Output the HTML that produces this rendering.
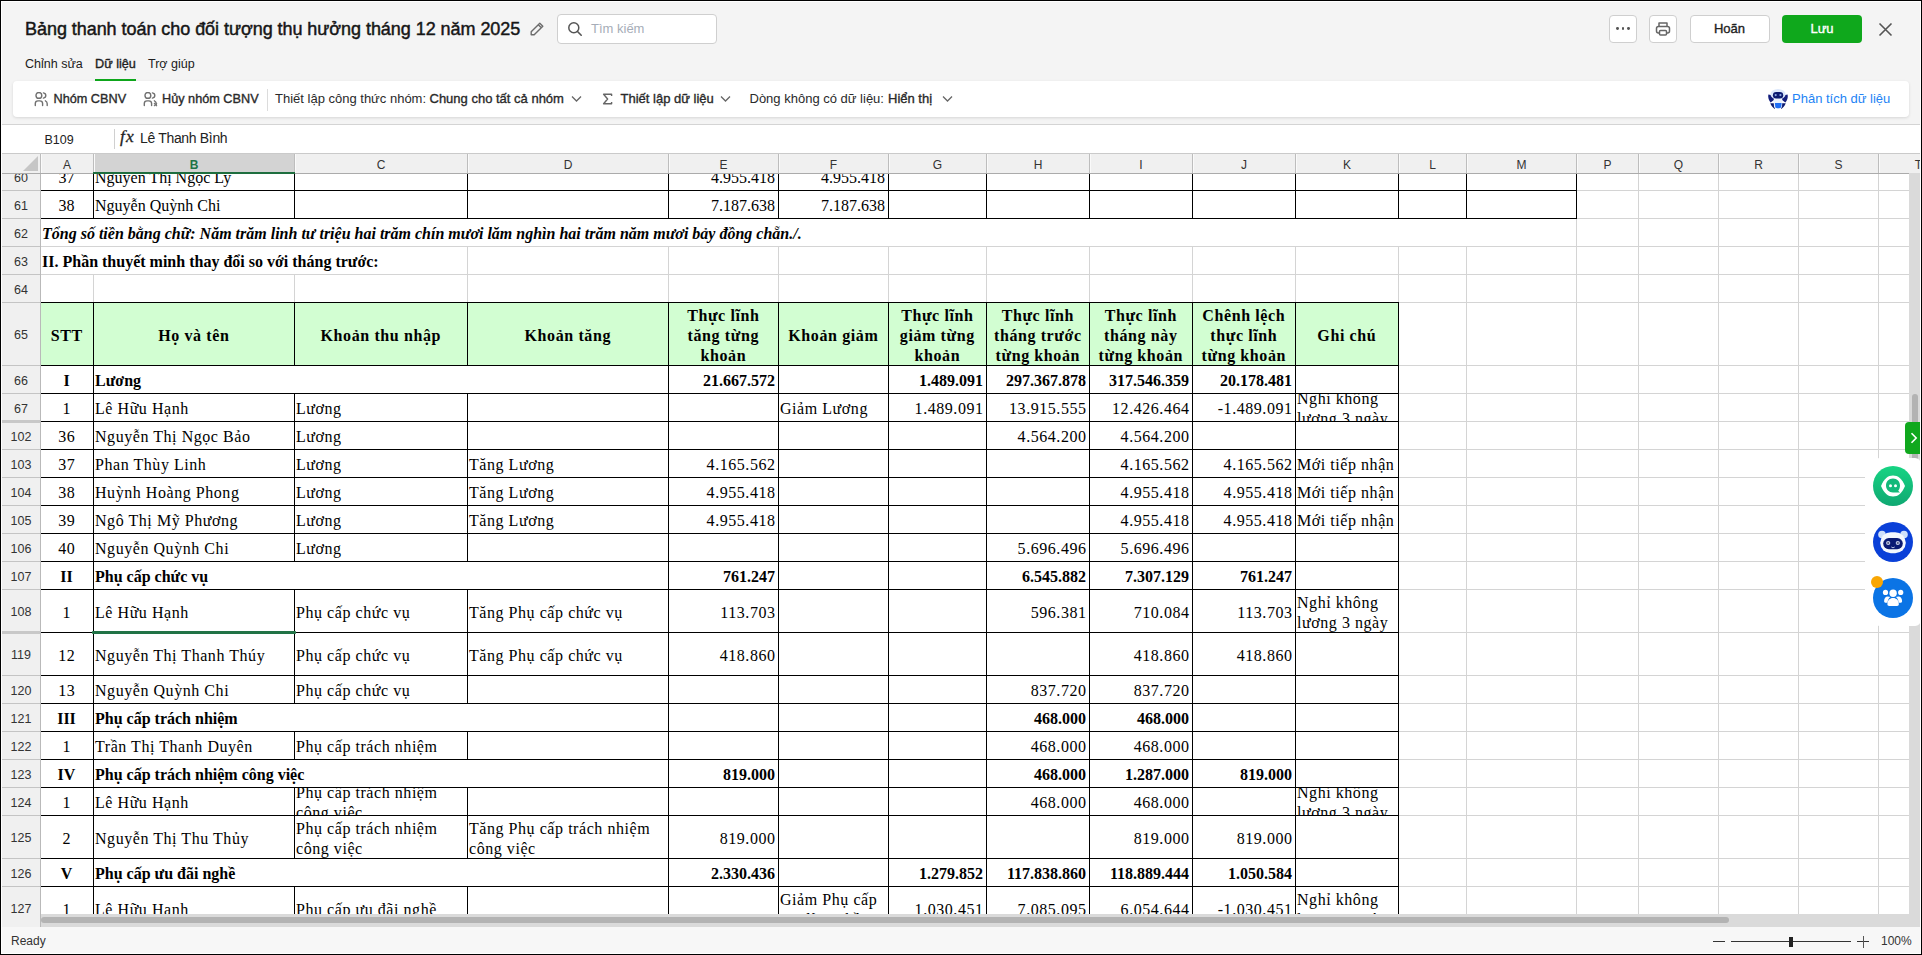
<!DOCTYPE html><html><head><meta charset="utf-8"><style>
html,body{margin:0;padding:0}
body{width:1922px;height:955px;position:relative;overflow:hidden;background:#f4f4f4;font-family:"Liberation Sans",sans-serif}
.t{position:absolute;white-space:pre}
.b{position:absolute}
.clip{position:absolute;overflow:hidden}
</style></head><body>

<div class="t" style="left:25px;top:19.76px;font:400 18px/18px 'Liberation Sans', sans-serif;color:#161616;-webkit-text-stroke:0.45px #161616;letter-spacing:-0.05px;">Bảng thanh toán cho đối tượng thụ hưởng tháng 12 năm 2025</div>
<svg class="b" style="left:529px;top:21px" width="16" height="16" viewBox="0 0 16 16"><path d="M10.8 2.2 L13.8 5.2 L5.2 13.8 L2.2 13.8 L2.2 10.8 Z M9.3 3.7 L12.3 6.7" fill="none" stroke="#6b6b6b" stroke-width="1.4" stroke-linejoin="round"/></svg>
<div class="b" style="left:557px;top:14px;width:158px;height:28px;background:#fff;border:1px solid #cfcfcf;border-radius:4px"></div>
<svg class="b" style="left:567px;top:21px" width="16" height="16" viewBox="0 0 16 16"><circle cx="6.8" cy="6.8" r="5" fill="none" stroke="#555" stroke-width="1.5"/><path d="M10.5 10.5 L14.2 14.2" stroke="#555" stroke-width="1.6" stroke-linecap="round"/></svg>
<div class="t" style="left:591px;top:22.00px;font:400 13px/13px 'Liberation Sans', sans-serif;color:#a6adb8;">Tìm kiếm</div>
<div class="b" style="left:1609px;top:15px;width:26px;height:26px;background:#fff;border:1px solid #cfcfcf;border-radius:4px"></div>
<div class="b" style="left:1616.3999999999999px;top:27.3px;width:2.8px;height:2.8px;background:#555;border-radius:50%"></div>
<div class="b" style="left:1621.6px;top:27.3px;width:2.8px;height:2.8px;background:#555;border-radius:50%"></div>
<div class="b" style="left:1626.8999999999999px;top:27.3px;width:2.8px;height:2.8px;background:#555;border-radius:50%"></div>
<div class="b" style="left:1649px;top:15px;width:26px;height:26px;background:#fff;border:1px solid #cfcfcf;border-radius:4px"></div>
<svg class="b" style="left:1654px;top:20px" width="18" height="18" viewBox="0 0 18 18"><path d="M5 6.5 V3 H13 V6.5" fill="none" stroke="#666" stroke-width="1.5" stroke-linejoin="round"/><rect x="2.5" y="6.5" width="13" height="6.5" rx="2" fill="none" stroke="#666" stroke-width="1.5"/><rect x="5.5" y="10.5" width="7" height="4.5" rx="1" fill="#fff" stroke="#666" stroke-width="1.5"/></svg>
<div class="b" style="left:1690px;top:15px;width:78px;height:26px;background:#fff;border:1px solid #cfcfcf;border-radius:4px"></div>
<div class="t" style="left:1690.5px;top:22.00px;width:78px;text-align:center;font:400 13px/13px 'Liberation Sans', sans-serif;color:#222;-webkit-text-stroke:0.35px currentColor;">Hoãn</div>
<div class="b" style="left:1782px;top:15px;width:80px;height:28px;background:#0fa81c;border-radius:4px"></div>
<div class="t" style="left:1782.0px;top:22.00px;width:80px;text-align:center;font:400 13px/13px 'Liberation Sans', sans-serif;color:#fff;-webkit-text-stroke:0.35px currentColor;">Lưu</div>
<svg class="b" style="left:1878px;top:22px" width="15" height="15" viewBox="0 0 15 15"><path d="M1.5 1.5 L13.5 13.5 M13.5 1.5 L1.5 13.5" stroke="#555" stroke-width="1.6"/></svg>
<div class="t" style="left:25px;top:58.42px;font:400 12.5px/12.5px 'Liberation Sans', sans-serif;color:#202020;">Chỉnh sửa</div>
<div class="t" style="left:95px;top:58.25px;font:400 12.7px/12.7px 'Liberation Sans', sans-serif;color:#1f1f1f;-webkit-text-stroke:0.35px currentColor;">Dữ liệu</div>
<div class="t" style="left:148px;top:58.42px;font:400 12.5px/12.5px 'Liberation Sans', sans-serif;color:#202020;">Trợ giúp</div>
<div class="b" style="left:95px;top:79px;width:41px;height:2px;background:#0fa81c"></div>
<div class="b" style="left:13px;top:81px;width:1896px;height:36px;background:#fff;border-radius:4px;box-shadow:0 1px 3px rgba(0,0,0,0.12)"></div>
<svg class="b" style="left:33px;top:92px" width="16" height="15" viewBox="0 0 16 15"><circle cx="5.9" cy="3.4" r="2.9" fill="none" stroke="#707070" stroke-width="1.4"/><path d="M2.3 13.6 V11.6 C2.3 9.9 3.5 8.9 5 8.9 H6.8 C8.4 8.9 9.6 9.9 9.6 11.6 V13.6" fill="none" stroke="#707070" stroke-width="1.4" stroke-linecap="round"/><path d="M10.4 0.9 C11.9 1.2 12.8 2.2 12.8 3.5 C12.8 4.8 11.9 5.8 10.4 6.1" fill="none" stroke="#707070" stroke-width="1.4" stroke-linecap="round"/><path d="M12.4 8.8 C13.6 9.3 14.2 10.4 14.2 11.8 V13.6" fill="none" stroke="#707070" stroke-width="1.4" stroke-linecap="round"/></svg>
<div class="t" style="left:53.5px;top:93.25px;font:400 12.7px/12.7px 'Liberation Sans', sans-serif;color:#2a2a2a;-webkit-text-stroke:0.35px currentColor;">Nhóm CBNV</div>
<svg class="b" style="left:142px;top:92px" width="16" height="15" viewBox="0 0 16 15"><circle cx="5.9" cy="3.4" r="2.9" fill="none" stroke="#707070" stroke-width="1.4"/><path d="M2.3 13.6 V11.6 C2.3 9.9 3.5 8.9 5 8.9 H6.8 C8.4 8.9 9.6 9.9 9.6 11.6 V13.6" fill="none" stroke="#707070" stroke-width="1.4" stroke-linecap="round"/><path d="M10.4 0.9 C11.9 1.2 12.8 2.2 12.8 3.5 C12.8 4.8 11.9 5.8 10.4 6.1" fill="none" stroke="#707070" stroke-width="1.4" stroke-linecap="round"/><path d="M12.4 8.8 C13.6 9.3 14.2 10.4 14.2 11.8 V13.6" fill="none" stroke="#707070" stroke-width="1.4" stroke-linecap="round"/><path d="M12 11 L15 14 M15 11 L12 14" stroke="#777" stroke-width="1.1"/></svg>
<div class="t" style="left:162px;top:93.25px;font:400 12.7px/12.7px 'Liberation Sans', sans-serif;color:#2a2a2a;-webkit-text-stroke:0.35px currentColor;">Hủy nhóm CBNV</div>
<div class="b" style="left:267px;top:89px;width:1px;height:22px;background:#dcdcdc"></div>
<div class="t" style="left:275px;top:92.00px;font:400 13px/13px 'Liberation Sans', sans-serif;color:#2a2a2a;">Thiết lập công thức nhóm:</div>
<div class="t" style="left:429.5px;top:92.00px;font:400 13px/13px 'Liberation Sans', sans-serif;color:#2a2a2a;-webkit-text-stroke:0.35px currentColor;">Chung cho tất cả nhóm</div>
<svg class="b" style="left:571px;top:95px" width="11" height="8" viewBox="0 0 11 8"><path d="M1 1.5 L5.5 6 L10 1.5" fill="none" stroke="#666" stroke-width="1.3"/></svg>
<svg class="b" style="left:602px;top:93px" width="11" height="12" viewBox="0 0 11 12"><path d="M9.6 3 V1.3 H1.6 L5.6 6 L1.6 10.7 H9.6 V9" fill="none" stroke="#666" stroke-width="1.4" stroke-linejoin="round"/></svg>
<div class="t" style="left:620.5px;top:92.00px;font:400 13px/13px 'Liberation Sans', sans-serif;color:#2a2a2a;-webkit-text-stroke:0.35px currentColor;">Thiết lập dữ liệu</div>
<svg class="b" style="left:720px;top:95px" width="11" height="8" viewBox="0 0 11 8"><path d="M1 1.5 L5.5 6 L10 1.5" fill="none" stroke="#666" stroke-width="1.3"/></svg>
<div class="t" style="left:749.5px;top:92.00px;font:400 13px/13px 'Liberation Sans', sans-serif;color:#2a2a2a;">Dòng không có dữ liệu:</div>
<div class="t" style="left:888px;top:92.00px;font:400 13px/13px 'Liberation Sans', sans-serif;color:#2a2a2a;-webkit-text-stroke:0.35px currentColor;">Hiển thị</div>
<svg class="b" style="left:942px;top:95px" width="11" height="8" viewBox="0 0 11 8"><path d="M1 1.5 L5.5 6 L10 1.5" fill="none" stroke="#666" stroke-width="1.3"/></svg>
<svg class="b" style="left:1768px;top:89px" width="20" height="20" viewBox="0 0 20 20">
<path d="M0.4 5.5 C-0.1 8.5 0.6 11.5 2.6 13.5 L6 11 L5.6 6.5 Z" fill="#121d7c"/><path d="M19.6 5.5 C20.1 8.5 19.4 11.5 17.4 13.5 L14 11 L14.4 6.5 Z" fill="#121d7c"/>
<path d="M2.3 14.3 L7 14.3 L7 19.9 C5 19 3.4 17 2.3 14.3 Z" fill="#0b1a70"/><path d="M17.7 14.3 L13 14.3 L13 19.9 C15 19 16.6 17 17.7 14.3 Z" fill="#0b1a70"/>
<ellipse cx="10" cy="5.3" rx="7.6" ry="5.2" fill="#dce8fb"/>
<rect x="4.9" y="3" width="10.3" height="6.6" rx="3.3" fill="#0b1a70"/>
<circle cx="7.7" cy="6.1" r="1.1" fill="#8aa6e2"/><circle cx="12.4" cy="6.1" r="1.1" fill="#8aa6e2"/>
<path d="M5.6 10.6 H14.4 L14 18.3 C12.6 19.9 7.4 19.9 6 18.3 Z" fill="#eaf1fd"/>
<path d="M6.9 14 H13.6 L13.2 18.2 C12 19.7 8 19.7 7.3 18.2 Z" fill="#1f6ef5"/>
</svg>
<div class="t" style="left:1792px;top:92.00px;font:400 13px/13px 'Liberation Sans', sans-serif;color:#2383f5;">Phân tích dữ liệu</div>
<div class="b" style="left:2px;top:124px;width:1918px;height:1px;background:#d4d4d4"></div>
<div class="b" style="left:2px;top:125px;width:1918px;height:28px;background:#fff"></div>
<div class="t" style="left:44.5px;top:134.42px;font:400 12.5px/12.5px 'Liberation Sans', sans-serif;color:#222;">B109</div>
<div class="b" style="left:114px;top:129px;width:1px;height:20px;background:#d0d0d0"></div>
<div class="t" style="left:120px;top:127.84px;font:italic 400 17.5px/17.5px 'Liberation Serif', serif;color:#222;-webkit-text-stroke:0.3px #222;letter-spacing:1.2px;">fx</div>
<div class="t" style="left:140px;top:131.15px;font:400 14px/14px 'Liberation Sans', sans-serif;color:#222;letter-spacing:-0.33px;">Lê Thanh Bình</div>
<div class="b" style="left:1px;top:153px;width:1919px;height:1px;background:#cacaca"></div>
<div class="b" style="left:1px;top:154px;width:1919px;height:19px;background:#f0f0f0"></div>
<svg class="b" style="left:22px;top:156px" width="16" height="16" viewBox="0 0 16 16"><path d="M16 0 V15 H1 Z" fill="#c6c6c6"/></svg>
<div class="b" style="left:94px;top:154px;width:200px;height:18px;background:#d3d3d3"></div>
<div class="b" style="left:40px;top:154px;width:1px;height:19px;background:#bdbdbd"></div>
<div class="b" style="left:41px;top:154px;width:1px;height:19px;background:#fafafa"></div>
<div class="b" style="left:93px;top:154px;width:1px;height:19px;background:#bdbdbd"></div>
<div class="b" style="left:94px;top:154px;width:1px;height:19px;background:#fafafa"></div>
<div class="b" style="left:294px;top:154px;width:1px;height:19px;background:#bdbdbd"></div>
<div class="b" style="left:295px;top:154px;width:1px;height:19px;background:#fafafa"></div>
<div class="b" style="left:467px;top:154px;width:1px;height:19px;background:#bdbdbd"></div>
<div class="b" style="left:468px;top:154px;width:1px;height:19px;background:#fafafa"></div>
<div class="b" style="left:668px;top:154px;width:1px;height:19px;background:#bdbdbd"></div>
<div class="b" style="left:669px;top:154px;width:1px;height:19px;background:#fafafa"></div>
<div class="b" style="left:778px;top:154px;width:1px;height:19px;background:#bdbdbd"></div>
<div class="b" style="left:779px;top:154px;width:1px;height:19px;background:#fafafa"></div>
<div class="b" style="left:888px;top:154px;width:1px;height:19px;background:#bdbdbd"></div>
<div class="b" style="left:889px;top:154px;width:1px;height:19px;background:#fafafa"></div>
<div class="b" style="left:986px;top:154px;width:1px;height:19px;background:#bdbdbd"></div>
<div class="b" style="left:987px;top:154px;width:1px;height:19px;background:#fafafa"></div>
<div class="b" style="left:1089px;top:154px;width:1px;height:19px;background:#bdbdbd"></div>
<div class="b" style="left:1090px;top:154px;width:1px;height:19px;background:#fafafa"></div>
<div class="b" style="left:1192px;top:154px;width:1px;height:19px;background:#bdbdbd"></div>
<div class="b" style="left:1193px;top:154px;width:1px;height:19px;background:#fafafa"></div>
<div class="b" style="left:1295px;top:154px;width:1px;height:19px;background:#bdbdbd"></div>
<div class="b" style="left:1296px;top:154px;width:1px;height:19px;background:#fafafa"></div>
<div class="b" style="left:1398px;top:154px;width:1px;height:19px;background:#bdbdbd"></div>
<div class="b" style="left:1399px;top:154px;width:1px;height:19px;background:#fafafa"></div>
<div class="b" style="left:1466px;top:154px;width:1px;height:19px;background:#bdbdbd"></div>
<div class="b" style="left:1467px;top:154px;width:1px;height:19px;background:#fafafa"></div>
<div class="b" style="left:1576px;top:154px;width:1px;height:19px;background:#bdbdbd"></div>
<div class="b" style="left:1577px;top:154px;width:1px;height:19px;background:#fafafa"></div>
<div class="b" style="left:1638px;top:154px;width:1px;height:19px;background:#bdbdbd"></div>
<div class="b" style="left:1639px;top:154px;width:1px;height:19px;background:#fafafa"></div>
<div class="b" style="left:1718px;top:154px;width:1px;height:19px;background:#bdbdbd"></div>
<div class="b" style="left:1719px;top:154px;width:1px;height:19px;background:#fafafa"></div>
<div class="b" style="left:1798px;top:154px;width:1px;height:19px;background:#bdbdbd"></div>
<div class="b" style="left:1799px;top:154px;width:1px;height:19px;background:#fafafa"></div>
<div class="b" style="left:1878px;top:154px;width:1px;height:19px;background:#bdbdbd"></div>
<div class="b" style="left:1879px;top:154px;width:1px;height:19px;background:#fafafa"></div>
<div class="b" style="left:1px;top:173px;width:1908px;height:1px;background:#ababab"></div>
<div class="b" style="left:93px;top:172px;width:202px;height:2px;background:#1e6e3e"></div>
<div class="t" style="left:37.0px;top:159.34px;width:60px;text-align:center;font:400 12px/12px 'Liberation Sans', sans-serif;color:#333;">A</div>
<div class="t" style="left:164.0px;top:159.34px;width:60px;text-align:center;font:700 12px/12px 'Liberation Sans', sans-serif;color:#217346;">B</div>
<div class="t" style="left:351.0px;top:159.34px;width:60px;text-align:center;font:400 12px/12px 'Liberation Sans', sans-serif;color:#333;">C</div>
<div class="t" style="left:538.0px;top:159.34px;width:60px;text-align:center;font:400 12px/12px 'Liberation Sans', sans-serif;color:#333;">D</div>
<div class="t" style="left:693.5px;top:159.34px;width:60px;text-align:center;font:400 12px/12px 'Liberation Sans', sans-serif;color:#333;">E</div>
<div class="t" style="left:803.5px;top:159.34px;width:60px;text-align:center;font:400 12px/12px 'Liberation Sans', sans-serif;color:#333;">F</div>
<div class="t" style="left:907.5px;top:159.34px;width:60px;text-align:center;font:400 12px/12px 'Liberation Sans', sans-serif;color:#333;">G</div>
<div class="t" style="left:1008.0px;top:159.34px;width:60px;text-align:center;font:400 12px/12px 'Liberation Sans', sans-serif;color:#333;">H</div>
<div class="t" style="left:1111.0px;top:159.34px;width:60px;text-align:center;font:400 12px/12px 'Liberation Sans', sans-serif;color:#333;">I</div>
<div class="t" style="left:1214.0px;top:159.34px;width:60px;text-align:center;font:400 12px/12px 'Liberation Sans', sans-serif;color:#333;">J</div>
<div class="t" style="left:1317.0px;top:159.34px;width:60px;text-align:center;font:400 12px/12px 'Liberation Sans', sans-serif;color:#333;">K</div>
<div class="t" style="left:1402.5px;top:159.34px;width:60px;text-align:center;font:400 12px/12px 'Liberation Sans', sans-serif;color:#333;">L</div>
<div class="t" style="left:1491.5px;top:159.34px;width:60px;text-align:center;font:400 12px/12px 'Liberation Sans', sans-serif;color:#333;">M</div>
<div class="t" style="left:1577.5px;top:159.34px;width:60px;text-align:center;font:400 12px/12px 'Liberation Sans', sans-serif;color:#333;">P</div>
<div class="t" style="left:1648.5px;top:159.34px;width:60px;text-align:center;font:400 12px/12px 'Liberation Sans', sans-serif;color:#333;">Q</div>
<div class="t" style="left:1728.5px;top:159.34px;width:60px;text-align:center;font:400 12px/12px 'Liberation Sans', sans-serif;color:#333;">R</div>
<div class="t" style="left:1808.5px;top:159.34px;width:60px;text-align:center;font:400 12px/12px 'Liberation Sans', sans-serif;color:#333;">S</div>
<div class="t" style="left:1888.5px;top:159.34px;width:60px;text-align:center;font:400 12px/12px 'Liberation Sans', sans-serif;color:#333;">T</div>
<div class="clip" style="left:1px;top:174px;width:1908px;height:740px;background:#fff">
<div class="b" style="left:0px;top:0px;width:39px;height:740px;background:#f0f0f0"></div>
<div class="b" style="left:39px;top:0px;width:1px;height:740px;background:#b9b9b9"></div>
<div class="b" style="left:92px;top:0px;width:1px;height:740px;background:#d4d4d4"></div>
<div class="b" style="left:293px;top:0px;width:1px;height:740px;background:#d4d4d4"></div>
<div class="b" style="left:466px;top:0px;width:1px;height:740px;background:#d4d4d4"></div>
<div class="b" style="left:667px;top:0px;width:1px;height:740px;background:#d4d4d4"></div>
<div class="b" style="left:777px;top:0px;width:1px;height:740px;background:#d4d4d4"></div>
<div class="b" style="left:887px;top:0px;width:1px;height:740px;background:#d4d4d4"></div>
<div class="b" style="left:985px;top:0px;width:1px;height:740px;background:#d4d4d4"></div>
<div class="b" style="left:1088px;top:0px;width:1px;height:740px;background:#d4d4d4"></div>
<div class="b" style="left:1191px;top:0px;width:1px;height:740px;background:#d4d4d4"></div>
<div class="b" style="left:1294px;top:0px;width:1px;height:740px;background:#d4d4d4"></div>
<div class="b" style="left:1397px;top:0px;width:1px;height:740px;background:#d4d4d4"></div>
<div class="b" style="left:1465px;top:0px;width:1px;height:740px;background:#d4d4d4"></div>
<div class="b" style="left:1575px;top:0px;width:1px;height:740px;background:#d4d4d4"></div>
<div class="b" style="left:1637px;top:0px;width:1px;height:740px;background:#d4d4d4"></div>
<div class="b" style="left:1717px;top:0px;width:1px;height:740px;background:#d4d4d4"></div>
<div class="b" style="left:1797px;top:0px;width:1px;height:740px;background:#d4d4d4"></div>
<div class="b" style="left:1877px;top:0px;width:1px;height:740px;background:#d4d4d4"></div>
<div class="b" style="left:1957px;top:0px;width:1px;height:740px;background:#d4d4d4"></div>
<div class="b" style="left:40px;top:16px;width:1868px;height:1px;background:#d4d4d4"></div>
<div class="b" style="left:0px;top:16px;width:39px;height:1px;background:#c4c4c4"></div>
<div class="b" style="left:40px;top:44px;width:1868px;height:1px;background:#d4d4d4"></div>
<div class="b" style="left:0px;top:44px;width:39px;height:1px;background:#c4c4c4"></div>
<div class="b" style="left:40px;top:72px;width:1868px;height:1px;background:#d4d4d4"></div>
<div class="b" style="left:0px;top:72px;width:39px;height:1px;background:#c4c4c4"></div>
<div class="b" style="left:40px;top:100px;width:1868px;height:1px;background:#d4d4d4"></div>
<div class="b" style="left:0px;top:100px;width:39px;height:1px;background:#c4c4c4"></div>
<div class="b" style="left:40px;top:128px;width:1868px;height:1px;background:#d4d4d4"></div>
<div class="b" style="left:0px;top:128px;width:39px;height:1px;background:#c4c4c4"></div>
<div class="b" style="left:40px;top:191px;width:1868px;height:1px;background:#d4d4d4"></div>
<div class="b" style="left:0px;top:191px;width:39px;height:1px;background:#c4c4c4"></div>
<div class="b" style="left:40px;top:219px;width:1868px;height:1px;background:#d4d4d4"></div>
<div class="b" style="left:0px;top:219px;width:39px;height:1px;background:#c4c4c4"></div>
<div class="b" style="left:40px;top:247px;width:1868px;height:1px;background:#d4d4d4"></div>
<div class="b" style="left:0px;top:247px;width:39px;height:1px;background:#c4c4c4"></div>
<div class="b" style="left:40px;top:275px;width:1868px;height:1px;background:#d4d4d4"></div>
<div class="b" style="left:0px;top:275px;width:39px;height:1px;background:#c4c4c4"></div>
<div class="b" style="left:40px;top:303px;width:1868px;height:1px;background:#d4d4d4"></div>
<div class="b" style="left:0px;top:303px;width:39px;height:1px;background:#c4c4c4"></div>
<div class="b" style="left:40px;top:331px;width:1868px;height:1px;background:#d4d4d4"></div>
<div class="b" style="left:0px;top:331px;width:39px;height:1px;background:#c4c4c4"></div>
<div class="b" style="left:40px;top:359px;width:1868px;height:1px;background:#d4d4d4"></div>
<div class="b" style="left:0px;top:359px;width:39px;height:1px;background:#c4c4c4"></div>
<div class="b" style="left:40px;top:387px;width:1868px;height:1px;background:#d4d4d4"></div>
<div class="b" style="left:0px;top:387px;width:39px;height:1px;background:#c4c4c4"></div>
<div class="b" style="left:40px;top:415px;width:1868px;height:1px;background:#d4d4d4"></div>
<div class="b" style="left:0px;top:415px;width:39px;height:1px;background:#c4c4c4"></div>
<div class="b" style="left:40px;top:458px;width:1868px;height:1px;background:#d4d4d4"></div>
<div class="b" style="left:0px;top:458px;width:39px;height:1px;background:#c4c4c4"></div>
<div class="b" style="left:40px;top:501px;width:1868px;height:1px;background:#d4d4d4"></div>
<div class="b" style="left:0px;top:501px;width:39px;height:1px;background:#c4c4c4"></div>
<div class="b" style="left:40px;top:529px;width:1868px;height:1px;background:#d4d4d4"></div>
<div class="b" style="left:0px;top:529px;width:39px;height:1px;background:#c4c4c4"></div>
<div class="b" style="left:40px;top:557px;width:1868px;height:1px;background:#d4d4d4"></div>
<div class="b" style="left:0px;top:557px;width:39px;height:1px;background:#c4c4c4"></div>
<div class="b" style="left:40px;top:585px;width:1868px;height:1px;background:#d4d4d4"></div>
<div class="b" style="left:0px;top:585px;width:39px;height:1px;background:#c4c4c4"></div>
<div class="b" style="left:40px;top:613px;width:1868px;height:1px;background:#d4d4d4"></div>
<div class="b" style="left:0px;top:613px;width:39px;height:1px;background:#c4c4c4"></div>
<div class="b" style="left:40px;top:641px;width:1868px;height:1px;background:#d4d4d4"></div>
<div class="b" style="left:0px;top:641px;width:39px;height:1px;background:#c4c4c4"></div>
<div class="b" style="left:40px;top:684px;width:1868px;height:1px;background:#d4d4d4"></div>
<div class="b" style="left:0px;top:684px;width:39px;height:1px;background:#c4c4c4"></div>
<div class="b" style="left:40px;top:712px;width:1868px;height:1px;background:#d4d4d4"></div>
<div class="b" style="left:0px;top:712px;width:39px;height:1px;background:#c4c4c4"></div>
<div class="b" style="left:40px;top:755px;width:1868px;height:1px;background:#d4d4d4"></div>
<div class="b" style="left:0px;top:755px;width:39px;height:1px;background:#c4c4c4"></div>
<div class="b" style="left:0px;top:246px;width:39px;height:3px;background:#c8c8c8"></div>
<div class="b" style="left:0px;top:457px;width:39px;height:3px;background:#c8c8c8"></div>
<div class="t" style="left:1.0px;top:-2.08px;width:38px;text-align:center;font:400 12.5px/12.5px 'Liberation Sans', sans-serif;color:#333;">60</div>
<div class="t" style="left:1.0px;top:25.92px;width:38px;text-align:center;font:400 12.5px/12.5px 'Liberation Sans', sans-serif;color:#333;">61</div>
<div class="t" style="left:1.0px;top:53.92px;width:38px;text-align:center;font:400 12.5px/12.5px 'Liberation Sans', sans-serif;color:#333;">62</div>
<div class="t" style="left:1.0px;top:81.92px;width:38px;text-align:center;font:400 12.5px/12.5px 'Liberation Sans', sans-serif;color:#333;">63</div>
<div class="t" style="left:1.0px;top:109.92px;width:38px;text-align:center;font:400 12.5px/12.5px 'Liberation Sans', sans-serif;color:#333;">64</div>
<div class="t" style="left:1.0px;top:155.42px;width:38px;text-align:center;font:400 12.5px/12.5px 'Liberation Sans', sans-serif;color:#333;">65</div>
<div class="t" style="left:1.0px;top:200.92px;width:38px;text-align:center;font:400 12.5px/12.5px 'Liberation Sans', sans-serif;color:#333;">66</div>
<div class="t" style="left:1.0px;top:228.92px;width:38px;text-align:center;font:400 12.5px/12.5px 'Liberation Sans', sans-serif;color:#333;">67</div>
<div class="t" style="left:1.0px;top:256.92px;width:38px;text-align:center;font:400 12.5px/12.5px 'Liberation Sans', sans-serif;color:#333;">102</div>
<div class="t" style="left:1.0px;top:284.92px;width:38px;text-align:center;font:400 12.5px/12.5px 'Liberation Sans', sans-serif;color:#333;">103</div>
<div class="t" style="left:1.0px;top:312.92px;width:38px;text-align:center;font:400 12.5px/12.5px 'Liberation Sans', sans-serif;color:#333;">104</div>
<div class="t" style="left:1.0px;top:340.92px;width:38px;text-align:center;font:400 12.5px/12.5px 'Liberation Sans', sans-serif;color:#333;">105</div>
<div class="t" style="left:1.0px;top:368.92px;width:38px;text-align:center;font:400 12.5px/12.5px 'Liberation Sans', sans-serif;color:#333;">106</div>
<div class="t" style="left:1.0px;top:396.92px;width:38px;text-align:center;font:400 12.5px/12.5px 'Liberation Sans', sans-serif;color:#333;">107</div>
<div class="t" style="left:1.0px;top:432.42px;width:38px;text-align:center;font:400 12.5px/12.5px 'Liberation Sans', sans-serif;color:#333;">108</div>
<div class="t" style="left:1.0px;top:475.42px;width:38px;text-align:center;font:400 12.5px/12.5px 'Liberation Sans', sans-serif;color:#333;">119</div>
<div class="t" style="left:1.0px;top:510.92px;width:38px;text-align:center;font:400 12.5px/12.5px 'Liberation Sans', sans-serif;color:#333;">120</div>
<div class="t" style="left:1.0px;top:538.92px;width:38px;text-align:center;font:400 12.5px/12.5px 'Liberation Sans', sans-serif;color:#333;">121</div>
<div class="t" style="left:1.0px;top:566.92px;width:38px;text-align:center;font:400 12.5px/12.5px 'Liberation Sans', sans-serif;color:#333;">122</div>
<div class="t" style="left:1.0px;top:594.92px;width:38px;text-align:center;font:400 12.5px/12.5px 'Liberation Sans', sans-serif;color:#333;">123</div>
<div class="t" style="left:1.0px;top:622.92px;width:38px;text-align:center;font:400 12.5px/12.5px 'Liberation Sans', sans-serif;color:#333;">124</div>
<div class="t" style="left:1.0px;top:658.42px;width:38px;text-align:center;font:400 12.5px/12.5px 'Liberation Sans', sans-serif;color:#333;">125</div>
<div class="t" style="left:1.0px;top:693.92px;width:38px;text-align:center;font:400 12.5px/12.5px 'Liberation Sans', sans-serif;color:#333;">126</div>
<div class="t" style="left:1.0px;top:729.42px;width:38px;text-align:center;font:400 12.5px/12.5px 'Liberation Sans', sans-serif;color:#333;">127</div>
<div class="b" style="left:40px;top:45px;width:1535px;height:27px;background:#fff"></div>
<div class="b" style="left:40px;top:73px;width:426px;height:27px;background:#fff"></div>
<div class="b" style="left:40px;top:129px;width:1357px;height:62px;background:#d2fed2"></div>
<div class="b" style="left:93px;top:192px;width:574px;height:27px;background:#fff"></div>
<div class="b" style="left:93px;top:388px;width:574px;height:27px;background:#fff"></div>
<div class="b" style="left:93px;top:530px;width:574px;height:27px;background:#fff"></div>
<div class="b" style="left:93px;top:586px;width:574px;height:27px;background:#fff"></div>
<div class="b" style="left:93px;top:685px;width:574px;height:27px;background:#fff"></div>
<div class="b" style="left:40px;top:16px;width:1536px;height:1px;background:#000"></div>
<div class="b" style="left:40px;top:44px;width:1536px;height:1px;background:#000"></div>
<div class="b" style="left:92px;top:0px;width:1px;height:45px;background:#000"></div>
<div class="b" style="left:293px;top:0px;width:1px;height:45px;background:#000"></div>
<div class="b" style="left:466px;top:0px;width:1px;height:45px;background:#000"></div>
<div class="b" style="left:667px;top:0px;width:1px;height:45px;background:#000"></div>
<div class="b" style="left:777px;top:0px;width:1px;height:45px;background:#000"></div>
<div class="b" style="left:887px;top:0px;width:1px;height:45px;background:#000"></div>
<div class="b" style="left:985px;top:0px;width:1px;height:45px;background:#000"></div>
<div class="b" style="left:1088px;top:0px;width:1px;height:45px;background:#000"></div>
<div class="b" style="left:1191px;top:0px;width:1px;height:45px;background:#000"></div>
<div class="b" style="left:1294px;top:0px;width:1px;height:45px;background:#000"></div>
<div class="b" style="left:1397px;top:0px;width:1px;height:45px;background:#000"></div>
<div class="b" style="left:1465px;top:0px;width:1px;height:45px;background:#000"></div>
<div class="b" style="left:1575px;top:0px;width:1px;height:45px;background:#000"></div>
<div class="b" style="left:40px;top:128px;width:1358px;height:1px;background:#000"></div>
<div class="b" style="left:40px;top:191px;width:1358px;height:1px;background:#000"></div>
<div class="b" style="left:40px;top:219px;width:1358px;height:1px;background:#000"></div>
<div class="b" style="left:40px;top:247px;width:1358px;height:1px;background:#000"></div>
<div class="b" style="left:40px;top:275px;width:1358px;height:1px;background:#000"></div>
<div class="b" style="left:40px;top:303px;width:1358px;height:1px;background:#000"></div>
<div class="b" style="left:40px;top:331px;width:1358px;height:1px;background:#000"></div>
<div class="b" style="left:40px;top:359px;width:1358px;height:1px;background:#000"></div>
<div class="b" style="left:40px;top:387px;width:1358px;height:1px;background:#000"></div>
<div class="b" style="left:40px;top:415px;width:1358px;height:1px;background:#000"></div>
<div class="b" style="left:40px;top:458px;width:1358px;height:1px;background:#000"></div>
<div class="b" style="left:40px;top:501px;width:1358px;height:1px;background:#000"></div>
<div class="b" style="left:40px;top:529px;width:1358px;height:1px;background:#000"></div>
<div class="b" style="left:40px;top:557px;width:1358px;height:1px;background:#000"></div>
<div class="b" style="left:40px;top:585px;width:1358px;height:1px;background:#000"></div>
<div class="b" style="left:40px;top:613px;width:1358px;height:1px;background:#000"></div>
<div class="b" style="left:40px;top:641px;width:1358px;height:1px;background:#000"></div>
<div class="b" style="left:40px;top:684px;width:1358px;height:1px;background:#000"></div>
<div class="b" style="left:40px;top:712px;width:1358px;height:1px;background:#000"></div>
<div class="b" style="left:40px;top:755px;width:1358px;height:1px;background:#000"></div>
<div class="b" style="left:92px;top:128px;width:1px;height:64px;background:#000"></div>
<div class="b" style="left:293px;top:128px;width:1px;height:64px;background:#000"></div>
<div class="b" style="left:466px;top:128px;width:1px;height:64px;background:#000"></div>
<div class="b" style="left:667px;top:128px;width:1px;height:64px;background:#000"></div>
<div class="b" style="left:777px;top:128px;width:1px;height:64px;background:#000"></div>
<div class="b" style="left:887px;top:128px;width:1px;height:64px;background:#000"></div>
<div class="b" style="left:985px;top:128px;width:1px;height:64px;background:#000"></div>
<div class="b" style="left:1088px;top:128px;width:1px;height:64px;background:#000"></div>
<div class="b" style="left:1191px;top:128px;width:1px;height:64px;background:#000"></div>
<div class="b" style="left:1294px;top:128px;width:1px;height:64px;background:#000"></div>
<div class="b" style="left:1397px;top:128px;width:1px;height:64px;background:#000"></div>
<div class="b" style="left:92px;top:191px;width:1px;height:29px;background:#000"></div>
<div class="b" style="left:667px;top:191px;width:1px;height:29px;background:#000"></div>
<div class="b" style="left:777px;top:191px;width:1px;height:29px;background:#000"></div>
<div class="b" style="left:887px;top:191px;width:1px;height:29px;background:#000"></div>
<div class="b" style="left:985px;top:191px;width:1px;height:29px;background:#000"></div>
<div class="b" style="left:1088px;top:191px;width:1px;height:29px;background:#000"></div>
<div class="b" style="left:1191px;top:191px;width:1px;height:29px;background:#000"></div>
<div class="b" style="left:1294px;top:191px;width:1px;height:29px;background:#000"></div>
<div class="b" style="left:1397px;top:191px;width:1px;height:29px;background:#000"></div>
<div class="b" style="left:92px;top:219px;width:1px;height:29px;background:#000"></div>
<div class="b" style="left:293px;top:219px;width:1px;height:29px;background:#000"></div>
<div class="b" style="left:466px;top:219px;width:1px;height:29px;background:#000"></div>
<div class="b" style="left:667px;top:219px;width:1px;height:29px;background:#000"></div>
<div class="b" style="left:777px;top:219px;width:1px;height:29px;background:#000"></div>
<div class="b" style="left:887px;top:219px;width:1px;height:29px;background:#000"></div>
<div class="b" style="left:985px;top:219px;width:1px;height:29px;background:#000"></div>
<div class="b" style="left:1088px;top:219px;width:1px;height:29px;background:#000"></div>
<div class="b" style="left:1191px;top:219px;width:1px;height:29px;background:#000"></div>
<div class="b" style="left:1294px;top:219px;width:1px;height:29px;background:#000"></div>
<div class="b" style="left:1397px;top:219px;width:1px;height:29px;background:#000"></div>
<div class="b" style="left:92px;top:247px;width:1px;height:29px;background:#000"></div>
<div class="b" style="left:293px;top:247px;width:1px;height:29px;background:#000"></div>
<div class="b" style="left:466px;top:247px;width:1px;height:29px;background:#000"></div>
<div class="b" style="left:667px;top:247px;width:1px;height:29px;background:#000"></div>
<div class="b" style="left:777px;top:247px;width:1px;height:29px;background:#000"></div>
<div class="b" style="left:887px;top:247px;width:1px;height:29px;background:#000"></div>
<div class="b" style="left:985px;top:247px;width:1px;height:29px;background:#000"></div>
<div class="b" style="left:1088px;top:247px;width:1px;height:29px;background:#000"></div>
<div class="b" style="left:1191px;top:247px;width:1px;height:29px;background:#000"></div>
<div class="b" style="left:1294px;top:247px;width:1px;height:29px;background:#000"></div>
<div class="b" style="left:1397px;top:247px;width:1px;height:29px;background:#000"></div>
<div class="b" style="left:92px;top:275px;width:1px;height:29px;background:#000"></div>
<div class="b" style="left:293px;top:275px;width:1px;height:29px;background:#000"></div>
<div class="b" style="left:466px;top:275px;width:1px;height:29px;background:#000"></div>
<div class="b" style="left:667px;top:275px;width:1px;height:29px;background:#000"></div>
<div class="b" style="left:777px;top:275px;width:1px;height:29px;background:#000"></div>
<div class="b" style="left:887px;top:275px;width:1px;height:29px;background:#000"></div>
<div class="b" style="left:985px;top:275px;width:1px;height:29px;background:#000"></div>
<div class="b" style="left:1088px;top:275px;width:1px;height:29px;background:#000"></div>
<div class="b" style="left:1191px;top:275px;width:1px;height:29px;background:#000"></div>
<div class="b" style="left:1294px;top:275px;width:1px;height:29px;background:#000"></div>
<div class="b" style="left:1397px;top:275px;width:1px;height:29px;background:#000"></div>
<div class="b" style="left:92px;top:303px;width:1px;height:29px;background:#000"></div>
<div class="b" style="left:293px;top:303px;width:1px;height:29px;background:#000"></div>
<div class="b" style="left:466px;top:303px;width:1px;height:29px;background:#000"></div>
<div class="b" style="left:667px;top:303px;width:1px;height:29px;background:#000"></div>
<div class="b" style="left:777px;top:303px;width:1px;height:29px;background:#000"></div>
<div class="b" style="left:887px;top:303px;width:1px;height:29px;background:#000"></div>
<div class="b" style="left:985px;top:303px;width:1px;height:29px;background:#000"></div>
<div class="b" style="left:1088px;top:303px;width:1px;height:29px;background:#000"></div>
<div class="b" style="left:1191px;top:303px;width:1px;height:29px;background:#000"></div>
<div class="b" style="left:1294px;top:303px;width:1px;height:29px;background:#000"></div>
<div class="b" style="left:1397px;top:303px;width:1px;height:29px;background:#000"></div>
<div class="b" style="left:92px;top:331px;width:1px;height:29px;background:#000"></div>
<div class="b" style="left:293px;top:331px;width:1px;height:29px;background:#000"></div>
<div class="b" style="left:466px;top:331px;width:1px;height:29px;background:#000"></div>
<div class="b" style="left:667px;top:331px;width:1px;height:29px;background:#000"></div>
<div class="b" style="left:777px;top:331px;width:1px;height:29px;background:#000"></div>
<div class="b" style="left:887px;top:331px;width:1px;height:29px;background:#000"></div>
<div class="b" style="left:985px;top:331px;width:1px;height:29px;background:#000"></div>
<div class="b" style="left:1088px;top:331px;width:1px;height:29px;background:#000"></div>
<div class="b" style="left:1191px;top:331px;width:1px;height:29px;background:#000"></div>
<div class="b" style="left:1294px;top:331px;width:1px;height:29px;background:#000"></div>
<div class="b" style="left:1397px;top:331px;width:1px;height:29px;background:#000"></div>
<div class="b" style="left:92px;top:359px;width:1px;height:29px;background:#000"></div>
<div class="b" style="left:293px;top:359px;width:1px;height:29px;background:#000"></div>
<div class="b" style="left:466px;top:359px;width:1px;height:29px;background:#000"></div>
<div class="b" style="left:667px;top:359px;width:1px;height:29px;background:#000"></div>
<div class="b" style="left:777px;top:359px;width:1px;height:29px;background:#000"></div>
<div class="b" style="left:887px;top:359px;width:1px;height:29px;background:#000"></div>
<div class="b" style="left:985px;top:359px;width:1px;height:29px;background:#000"></div>
<div class="b" style="left:1088px;top:359px;width:1px;height:29px;background:#000"></div>
<div class="b" style="left:1191px;top:359px;width:1px;height:29px;background:#000"></div>
<div class="b" style="left:1294px;top:359px;width:1px;height:29px;background:#000"></div>
<div class="b" style="left:1397px;top:359px;width:1px;height:29px;background:#000"></div>
<div class="b" style="left:92px;top:387px;width:1px;height:29px;background:#000"></div>
<div class="b" style="left:667px;top:387px;width:1px;height:29px;background:#000"></div>
<div class="b" style="left:777px;top:387px;width:1px;height:29px;background:#000"></div>
<div class="b" style="left:887px;top:387px;width:1px;height:29px;background:#000"></div>
<div class="b" style="left:985px;top:387px;width:1px;height:29px;background:#000"></div>
<div class="b" style="left:1088px;top:387px;width:1px;height:29px;background:#000"></div>
<div class="b" style="left:1191px;top:387px;width:1px;height:29px;background:#000"></div>
<div class="b" style="left:1294px;top:387px;width:1px;height:29px;background:#000"></div>
<div class="b" style="left:1397px;top:387px;width:1px;height:29px;background:#000"></div>
<div class="b" style="left:92px;top:415px;width:1px;height:44px;background:#000"></div>
<div class="b" style="left:293px;top:415px;width:1px;height:44px;background:#000"></div>
<div class="b" style="left:466px;top:415px;width:1px;height:44px;background:#000"></div>
<div class="b" style="left:667px;top:415px;width:1px;height:44px;background:#000"></div>
<div class="b" style="left:777px;top:415px;width:1px;height:44px;background:#000"></div>
<div class="b" style="left:887px;top:415px;width:1px;height:44px;background:#000"></div>
<div class="b" style="left:985px;top:415px;width:1px;height:44px;background:#000"></div>
<div class="b" style="left:1088px;top:415px;width:1px;height:44px;background:#000"></div>
<div class="b" style="left:1191px;top:415px;width:1px;height:44px;background:#000"></div>
<div class="b" style="left:1294px;top:415px;width:1px;height:44px;background:#000"></div>
<div class="b" style="left:1397px;top:415px;width:1px;height:44px;background:#000"></div>
<div class="b" style="left:92px;top:458px;width:1px;height:44px;background:#000"></div>
<div class="b" style="left:293px;top:458px;width:1px;height:44px;background:#000"></div>
<div class="b" style="left:466px;top:458px;width:1px;height:44px;background:#000"></div>
<div class="b" style="left:667px;top:458px;width:1px;height:44px;background:#000"></div>
<div class="b" style="left:777px;top:458px;width:1px;height:44px;background:#000"></div>
<div class="b" style="left:887px;top:458px;width:1px;height:44px;background:#000"></div>
<div class="b" style="left:985px;top:458px;width:1px;height:44px;background:#000"></div>
<div class="b" style="left:1088px;top:458px;width:1px;height:44px;background:#000"></div>
<div class="b" style="left:1191px;top:458px;width:1px;height:44px;background:#000"></div>
<div class="b" style="left:1294px;top:458px;width:1px;height:44px;background:#000"></div>
<div class="b" style="left:1397px;top:458px;width:1px;height:44px;background:#000"></div>
<div class="b" style="left:92px;top:501px;width:1px;height:29px;background:#000"></div>
<div class="b" style="left:293px;top:501px;width:1px;height:29px;background:#000"></div>
<div class="b" style="left:466px;top:501px;width:1px;height:29px;background:#000"></div>
<div class="b" style="left:667px;top:501px;width:1px;height:29px;background:#000"></div>
<div class="b" style="left:777px;top:501px;width:1px;height:29px;background:#000"></div>
<div class="b" style="left:887px;top:501px;width:1px;height:29px;background:#000"></div>
<div class="b" style="left:985px;top:501px;width:1px;height:29px;background:#000"></div>
<div class="b" style="left:1088px;top:501px;width:1px;height:29px;background:#000"></div>
<div class="b" style="left:1191px;top:501px;width:1px;height:29px;background:#000"></div>
<div class="b" style="left:1294px;top:501px;width:1px;height:29px;background:#000"></div>
<div class="b" style="left:1397px;top:501px;width:1px;height:29px;background:#000"></div>
<div class="b" style="left:92px;top:529px;width:1px;height:29px;background:#000"></div>
<div class="b" style="left:667px;top:529px;width:1px;height:29px;background:#000"></div>
<div class="b" style="left:777px;top:529px;width:1px;height:29px;background:#000"></div>
<div class="b" style="left:887px;top:529px;width:1px;height:29px;background:#000"></div>
<div class="b" style="left:985px;top:529px;width:1px;height:29px;background:#000"></div>
<div class="b" style="left:1088px;top:529px;width:1px;height:29px;background:#000"></div>
<div class="b" style="left:1191px;top:529px;width:1px;height:29px;background:#000"></div>
<div class="b" style="left:1294px;top:529px;width:1px;height:29px;background:#000"></div>
<div class="b" style="left:1397px;top:529px;width:1px;height:29px;background:#000"></div>
<div class="b" style="left:92px;top:557px;width:1px;height:29px;background:#000"></div>
<div class="b" style="left:293px;top:557px;width:1px;height:29px;background:#000"></div>
<div class="b" style="left:466px;top:557px;width:1px;height:29px;background:#000"></div>
<div class="b" style="left:667px;top:557px;width:1px;height:29px;background:#000"></div>
<div class="b" style="left:777px;top:557px;width:1px;height:29px;background:#000"></div>
<div class="b" style="left:887px;top:557px;width:1px;height:29px;background:#000"></div>
<div class="b" style="left:985px;top:557px;width:1px;height:29px;background:#000"></div>
<div class="b" style="left:1088px;top:557px;width:1px;height:29px;background:#000"></div>
<div class="b" style="left:1191px;top:557px;width:1px;height:29px;background:#000"></div>
<div class="b" style="left:1294px;top:557px;width:1px;height:29px;background:#000"></div>
<div class="b" style="left:1397px;top:557px;width:1px;height:29px;background:#000"></div>
<div class="b" style="left:92px;top:585px;width:1px;height:29px;background:#000"></div>
<div class="b" style="left:667px;top:585px;width:1px;height:29px;background:#000"></div>
<div class="b" style="left:777px;top:585px;width:1px;height:29px;background:#000"></div>
<div class="b" style="left:887px;top:585px;width:1px;height:29px;background:#000"></div>
<div class="b" style="left:985px;top:585px;width:1px;height:29px;background:#000"></div>
<div class="b" style="left:1088px;top:585px;width:1px;height:29px;background:#000"></div>
<div class="b" style="left:1191px;top:585px;width:1px;height:29px;background:#000"></div>
<div class="b" style="left:1294px;top:585px;width:1px;height:29px;background:#000"></div>
<div class="b" style="left:1397px;top:585px;width:1px;height:29px;background:#000"></div>
<div class="b" style="left:92px;top:613px;width:1px;height:29px;background:#000"></div>
<div class="b" style="left:293px;top:613px;width:1px;height:29px;background:#000"></div>
<div class="b" style="left:466px;top:613px;width:1px;height:29px;background:#000"></div>
<div class="b" style="left:667px;top:613px;width:1px;height:29px;background:#000"></div>
<div class="b" style="left:777px;top:613px;width:1px;height:29px;background:#000"></div>
<div class="b" style="left:887px;top:613px;width:1px;height:29px;background:#000"></div>
<div class="b" style="left:985px;top:613px;width:1px;height:29px;background:#000"></div>
<div class="b" style="left:1088px;top:613px;width:1px;height:29px;background:#000"></div>
<div class="b" style="left:1191px;top:613px;width:1px;height:29px;background:#000"></div>
<div class="b" style="left:1294px;top:613px;width:1px;height:29px;background:#000"></div>
<div class="b" style="left:1397px;top:613px;width:1px;height:29px;background:#000"></div>
<div class="b" style="left:92px;top:641px;width:1px;height:44px;background:#000"></div>
<div class="b" style="left:293px;top:641px;width:1px;height:44px;background:#000"></div>
<div class="b" style="left:466px;top:641px;width:1px;height:44px;background:#000"></div>
<div class="b" style="left:667px;top:641px;width:1px;height:44px;background:#000"></div>
<div class="b" style="left:777px;top:641px;width:1px;height:44px;background:#000"></div>
<div class="b" style="left:887px;top:641px;width:1px;height:44px;background:#000"></div>
<div class="b" style="left:985px;top:641px;width:1px;height:44px;background:#000"></div>
<div class="b" style="left:1088px;top:641px;width:1px;height:44px;background:#000"></div>
<div class="b" style="left:1191px;top:641px;width:1px;height:44px;background:#000"></div>
<div class="b" style="left:1294px;top:641px;width:1px;height:44px;background:#000"></div>
<div class="b" style="left:1397px;top:641px;width:1px;height:44px;background:#000"></div>
<div class="b" style="left:92px;top:684px;width:1px;height:29px;background:#000"></div>
<div class="b" style="left:667px;top:684px;width:1px;height:29px;background:#000"></div>
<div class="b" style="left:777px;top:684px;width:1px;height:29px;background:#000"></div>
<div class="b" style="left:887px;top:684px;width:1px;height:29px;background:#000"></div>
<div class="b" style="left:985px;top:684px;width:1px;height:29px;background:#000"></div>
<div class="b" style="left:1088px;top:684px;width:1px;height:29px;background:#000"></div>
<div class="b" style="left:1191px;top:684px;width:1px;height:29px;background:#000"></div>
<div class="b" style="left:1294px;top:684px;width:1px;height:29px;background:#000"></div>
<div class="b" style="left:1397px;top:684px;width:1px;height:29px;background:#000"></div>
<div class="b" style="left:92px;top:712px;width:1px;height:44px;background:#000"></div>
<div class="b" style="left:293px;top:712px;width:1px;height:44px;background:#000"></div>
<div class="b" style="left:466px;top:712px;width:1px;height:44px;background:#000"></div>
<div class="b" style="left:667px;top:712px;width:1px;height:44px;background:#000"></div>
<div class="b" style="left:777px;top:712px;width:1px;height:44px;background:#000"></div>
<div class="b" style="left:887px;top:712px;width:1px;height:44px;background:#000"></div>
<div class="b" style="left:985px;top:712px;width:1px;height:44px;background:#000"></div>
<div class="b" style="left:1088px;top:712px;width:1px;height:44px;background:#000"></div>
<div class="b" style="left:1191px;top:712px;width:1px;height:44px;background:#000"></div>
<div class="b" style="left:1294px;top:712px;width:1px;height:44px;background:#000"></div>
<div class="b" style="left:1397px;top:712px;width:1px;height:44px;background:#000"></div>
<div class="clip" style="left:40px;top:-11px;width:52px;height:27px">
<div class="t" style="top:7.40px;font:400 16px/16px 'Liberation Serif', serif;color:#000;left:-101.0px;width:253px;text-align:center;">37</div>
</div>
<div class="clip" style="left:93px;top:-11px;width:200px;height:27px">
<div class="t" style="top:7.40px;font:400 16px/16px 'Liberation Serif', serif;color:#000;left:1px;">Nguyễn Thị Ngọc Ly</div>
</div>
<div class="clip" style="left:668px;top:-11px;width:109px;height:27px">
<div class="t" style="top:7.40px;font:400 16px/16px 'Liberation Serif', serif;color:#000;left:-201px;width:307px;text-align:right;">4.955.418</div>
</div>
<div class="clip" style="left:778px;top:-11px;width:109px;height:27px">
<div class="t" style="top:7.40px;font:400 16px/16px 'Liberation Serif', serif;color:#000;left:-201px;width:307px;text-align:right;">4.955.418</div>
</div>
<div class="clip" style="left:40px;top:17px;width:52px;height:27px">
<div class="t" style="top:7.40px;font:400 16px/16px 'Liberation Serif', serif;color:#000;left:-101.0px;width:253px;text-align:center;">38</div>
</div>
<div class="clip" style="left:93px;top:17px;width:200px;height:27px">
<div class="t" style="top:7.40px;font:400 16px/16px 'Liberation Serif', serif;color:#000;left:1px;">Nguyễn Quỳnh Chi</div>
</div>
<div class="clip" style="left:668px;top:17px;width:109px;height:27px">
<div class="t" style="top:7.40px;font:400 16px/16px 'Liberation Serif', serif;color:#000;left:-201px;width:307px;text-align:right;">7.187.638</div>
</div>
<div class="clip" style="left:778px;top:17px;width:109px;height:27px">
<div class="t" style="top:7.40px;font:400 16px/16px 'Liberation Serif', serif;color:#000;left:-201px;width:307px;text-align:right;">7.187.638</div>
</div>
<div class="clip" style="left:40px;top:45px;width:1535px;height:27px">
<div class="t" style="top:7.40px;font:italic 700 16px/16px 'Liberation Serif', serif;color:#000;left:1px;">Tổng số tiền bằng chữ: Năm trăm linh tư triệu hai trăm chín mươi lăm nghìn hai trăm năm mươi bảy đồng chẵn./.</div>
</div>
<div class="clip" style="left:40px;top:73px;width:426px;height:27px">
<div class="t" style="top:7.40px;font:700 16px/16px 'Liberation Serif', serif;color:#000;left:1px;">II. Phần thuyết minh thay đổi so với tháng trước:</div>
</div>
<div class="clip" style="left:40px;top:129px;width:52px;height:62px">
<div class="t" style="top:24.90px;font:700 16px/16px 'Liberation Serif', serif;color:#000;letter-spacing:0.6px;left:-100.7px;width:253px;text-align:center;">STT</div>
</div>
<div class="clip" style="left:93px;top:129px;width:200px;height:62px">
<div class="t" style="top:24.90px;font:700 16px/16px 'Liberation Serif', serif;color:#000;letter-spacing:0.6px;left:-100.7px;width:401px;text-align:center;">Họ và tên</div>
</div>
<div class="clip" style="left:294px;top:129px;width:172px;height:62px">
<div class="t" style="top:24.90px;font:700 16px/16px 'Liberation Serif', serif;color:#000;letter-spacing:0.6px;left:-100.7px;width:373px;text-align:center;">Khoản thu nhập</div>
</div>
<div class="clip" style="left:467px;top:129px;width:200px;height:62px">
<div class="t" style="top:24.90px;font:700 16px/16px 'Liberation Serif', serif;color:#000;letter-spacing:0.6px;left:-100.7px;width:401px;text-align:center;">Khoản tăng</div>
</div>
<div class="clip" style="left:668px;top:129px;width:109px;height:62px">
<div class="t" style="top:4.90px;font:700 16px/16px 'Liberation Serif', serif;color:#000;letter-spacing:0.6px;left:-100.7px;width:310px;text-align:center;">Thực lĩnh</div>
<div class="t" style="top:24.90px;font:700 16px/16px 'Liberation Serif', serif;color:#000;letter-spacing:0.6px;left:-100.7px;width:310px;text-align:center;">tăng từng</div>
<div class="t" style="top:44.90px;font:700 16px/16px 'Liberation Serif', serif;color:#000;letter-spacing:0.6px;left:-100.7px;width:310px;text-align:center;">khoản</div>
</div>
<div class="clip" style="left:778px;top:129px;width:109px;height:62px">
<div class="t" style="top:24.90px;font:700 16px/16px 'Liberation Serif', serif;color:#000;letter-spacing:0.6px;left:-100.7px;width:310px;text-align:center;">Khoản giảm</div>
</div>
<div class="clip" style="left:888px;top:129px;width:97px;height:62px">
<div class="t" style="top:4.90px;font:700 16px/16px 'Liberation Serif', serif;color:#000;letter-spacing:0.6px;left:-100.7px;width:298px;text-align:center;">Thực lĩnh</div>
<div class="t" style="top:24.90px;font:700 16px/16px 'Liberation Serif', serif;color:#000;letter-spacing:0.6px;left:-100.7px;width:298px;text-align:center;">giảm từng</div>
<div class="t" style="top:44.90px;font:700 16px/16px 'Liberation Serif', serif;color:#000;letter-spacing:0.6px;left:-100.7px;width:298px;text-align:center;">khoản</div>
</div>
<div class="clip" style="left:986px;top:129px;width:102px;height:62px">
<div class="t" style="top:4.90px;font:700 16px/16px 'Liberation Serif', serif;color:#000;letter-spacing:0.6px;left:-100.7px;width:303px;text-align:center;">Thực lĩnh</div>
<div class="t" style="top:24.90px;font:700 16px/16px 'Liberation Serif', serif;color:#000;letter-spacing:0.6px;left:-100.7px;width:303px;text-align:center;">tháng trước</div>
<div class="t" style="top:44.90px;font:700 16px/16px 'Liberation Serif', serif;color:#000;letter-spacing:0.6px;left:-100.7px;width:303px;text-align:center;">từng khoản</div>
</div>
<div class="clip" style="left:1089px;top:129px;width:102px;height:62px">
<div class="t" style="top:4.90px;font:700 16px/16px 'Liberation Serif', serif;color:#000;letter-spacing:0.6px;left:-100.7px;width:303px;text-align:center;">Thực lĩnh</div>
<div class="t" style="top:24.90px;font:700 16px/16px 'Liberation Serif', serif;color:#000;letter-spacing:0.6px;left:-100.7px;width:303px;text-align:center;">tháng này</div>
<div class="t" style="top:44.90px;font:700 16px/16px 'Liberation Serif', serif;color:#000;letter-spacing:0.6px;left:-100.7px;width:303px;text-align:center;">từng khoản</div>
</div>
<div class="clip" style="left:1192px;top:129px;width:102px;height:62px">
<div class="t" style="top:4.90px;font:700 16px/16px 'Liberation Serif', serif;color:#000;letter-spacing:0.6px;left:-100.7px;width:303px;text-align:center;">Chênh lệch</div>
<div class="t" style="top:24.90px;font:700 16px/16px 'Liberation Serif', serif;color:#000;letter-spacing:0.6px;left:-100.7px;width:303px;text-align:center;">thực lĩnh</div>
<div class="t" style="top:44.90px;font:700 16px/16px 'Liberation Serif', serif;color:#000;letter-spacing:0.6px;left:-100.7px;width:303px;text-align:center;">từng khoản</div>
</div>
<div class="clip" style="left:1295px;top:129px;width:102px;height:62px">
<div class="t" style="top:24.90px;font:700 16px/16px 'Liberation Serif', serif;color:#000;letter-spacing:0.6px;left:-100.7px;width:303px;text-align:center;">Ghi chú</div>
</div>
<div class="clip" style="left:40px;top:192px;width:52px;height:27px">
<div class="t" style="top:7.40px;font:700 16px/16px 'Liberation Serif', serif;color:#000;left:-101.0px;width:253px;text-align:center;">I</div>
</div>
<div class="clip" style="left:93px;top:192px;width:574px;height:27px">
<div class="t" style="top:7.40px;font:700 16px/16px 'Liberation Serif', serif;color:#000;left:1px;">Lương</div>
</div>
<div class="clip" style="left:668px;top:192px;width:109px;height:27px">
<div class="t" style="top:7.40px;font:700 16px/16px 'Liberation Serif', serif;color:#000;left:-201px;width:307px;text-align:right;">21.667.572</div>
</div>
<div class="clip" style="left:888px;top:192px;width:97px;height:27px">
<div class="t" style="top:7.40px;font:700 16px/16px 'Liberation Serif', serif;color:#000;left:-201px;width:295px;text-align:right;">1.489.091</div>
</div>
<div class="clip" style="left:986px;top:192px;width:102px;height:27px">
<div class="t" style="top:7.40px;font:700 16px/16px 'Liberation Serif', serif;color:#000;left:-201px;width:300px;text-align:right;">297.367.878</div>
</div>
<div class="clip" style="left:1089px;top:192px;width:102px;height:27px">
<div class="t" style="top:7.40px;font:700 16px/16px 'Liberation Serif', serif;color:#000;left:-201px;width:300px;text-align:right;">317.546.359</div>
</div>
<div class="clip" style="left:1192px;top:192px;width:102px;height:27px">
<div class="t" style="top:7.40px;font:700 16px/16px 'Liberation Serif', serif;color:#000;left:-201px;width:300px;text-align:right;">20.178.481</div>
</div>
<div class="clip" style="left:40px;top:220px;width:52px;height:27px">
<div class="t" style="top:7.40px;font:400 16px/16px 'Liberation Serif', serif;color:#000;letter-spacing:0.55px;left:-100.725px;width:253px;text-align:center;">1</div>
</div>
<div class="clip" style="left:93px;top:220px;width:200px;height:27px">
<div class="t" style="top:7.40px;font:400 16px/16px 'Liberation Serif', serif;color:#000;letter-spacing:0.55px;left:1px;">Lê Hữu Hạnh</div>
</div>
<div class="clip" style="left:294px;top:220px;width:172px;height:27px">
<div class="t" style="top:7.40px;font:400 16px/16px 'Liberation Serif', serif;color:#000;letter-spacing:0.55px;left:1px;">Lương</div>
</div>
<div class="clip" style="left:778px;top:220px;width:109px;height:27px">
<div class="t" style="top:7.40px;font:400 16px/16px 'Liberation Serif', serif;color:#000;letter-spacing:0.55px;left:1px;">Giảm Lương</div>
</div>
<div class="clip" style="left:888px;top:220px;width:97px;height:27px">
<div class="t" style="top:7.40px;font:400 16px/16px 'Liberation Serif', serif;color:#000;letter-spacing:0.55px;left:-201px;width:295.55px;text-align:right;">1.489.091</div>
</div>
<div class="clip" style="left:986px;top:220px;width:102px;height:27px">
<div class="t" style="top:7.40px;font:400 16px/16px 'Liberation Serif', serif;color:#000;letter-spacing:0.55px;left:-201px;width:300.55px;text-align:right;">13.915.555</div>
</div>
<div class="clip" style="left:1089px;top:220px;width:102px;height:27px">
<div class="t" style="top:7.40px;font:400 16px/16px 'Liberation Serif', serif;color:#000;letter-spacing:0.55px;left:-201px;width:300.55px;text-align:right;">12.426.464</div>
</div>
<div class="clip" style="left:1192px;top:220px;width:102px;height:27px">
<div class="t" style="top:7.40px;font:400 16px/16px 'Liberation Serif', serif;color:#000;letter-spacing:0.55px;left:-201px;width:300.55px;text-align:right;">-1.489.091</div>
</div>
<div class="clip" style="left:1295px;top:220px;width:102px;height:27px">
<div class="t" style="top:-2.60px;font:400 16px/16px 'Liberation Serif', serif;color:#000;letter-spacing:0.55px;left:1px;">Nghỉ không</div>
<div class="t" style="top:17.40px;font:400 16px/16px 'Liberation Serif', serif;color:#000;letter-spacing:0.55px;left:1px;">lương 3 ngày</div>
</div>
<div class="clip" style="left:40px;top:248px;width:52px;height:27px">
<div class="t" style="top:7.40px;font:400 16px/16px 'Liberation Serif', serif;color:#000;letter-spacing:0.55px;left:-100.725px;width:253px;text-align:center;">36</div>
</div>
<div class="clip" style="left:93px;top:248px;width:200px;height:27px">
<div class="t" style="top:7.40px;font:400 16px/16px 'Liberation Serif', serif;color:#000;letter-spacing:0.55px;left:1px;">Nguyễn Thị Ngọc Bảo</div>
</div>
<div class="clip" style="left:294px;top:248px;width:172px;height:27px">
<div class="t" style="top:7.40px;font:400 16px/16px 'Liberation Serif', serif;color:#000;letter-spacing:0.55px;left:1px;">Lương</div>
</div>
<div class="clip" style="left:986px;top:248px;width:102px;height:27px">
<div class="t" style="top:7.40px;font:400 16px/16px 'Liberation Serif', serif;color:#000;letter-spacing:0.55px;left:-201px;width:300.55px;text-align:right;">4.564.200</div>
</div>
<div class="clip" style="left:1089px;top:248px;width:102px;height:27px">
<div class="t" style="top:7.40px;font:400 16px/16px 'Liberation Serif', serif;color:#000;letter-spacing:0.55px;left:-201px;width:300.55px;text-align:right;">4.564.200</div>
</div>
<div class="clip" style="left:40px;top:276px;width:52px;height:27px">
<div class="t" style="top:7.40px;font:400 16px/16px 'Liberation Serif', serif;color:#000;letter-spacing:0.55px;left:-100.725px;width:253px;text-align:center;">37</div>
</div>
<div class="clip" style="left:93px;top:276px;width:200px;height:27px">
<div class="t" style="top:7.40px;font:400 16px/16px 'Liberation Serif', serif;color:#000;letter-spacing:0.55px;left:1px;">Phan Thùy Linh</div>
</div>
<div class="clip" style="left:294px;top:276px;width:172px;height:27px">
<div class="t" style="top:7.40px;font:400 16px/16px 'Liberation Serif', serif;color:#000;letter-spacing:0.55px;left:1px;">Lương</div>
</div>
<div class="clip" style="left:467px;top:276px;width:200px;height:27px">
<div class="t" style="top:7.40px;font:400 16px/16px 'Liberation Serif', serif;color:#000;letter-spacing:0.55px;left:1px;">Tăng Lương</div>
</div>
<div class="clip" style="left:668px;top:276px;width:109px;height:27px">
<div class="t" style="top:7.40px;font:400 16px/16px 'Liberation Serif', serif;color:#000;letter-spacing:0.55px;left:-201px;width:307.55px;text-align:right;">4.165.562</div>
</div>
<div class="clip" style="left:1089px;top:276px;width:102px;height:27px">
<div class="t" style="top:7.40px;font:400 16px/16px 'Liberation Serif', serif;color:#000;letter-spacing:0.55px;left:-201px;width:300.55px;text-align:right;">4.165.562</div>
</div>
<div class="clip" style="left:1192px;top:276px;width:102px;height:27px">
<div class="t" style="top:7.40px;font:400 16px/16px 'Liberation Serif', serif;color:#000;letter-spacing:0.55px;left:-201px;width:300.55px;text-align:right;">4.165.562</div>
</div>
<div class="clip" style="left:1295px;top:276px;width:102px;height:27px">
<div class="t" style="top:7.40px;font:400 16px/16px 'Liberation Serif', serif;color:#000;letter-spacing:0.55px;left:1px;">Mới tiếp nhận</div>
</div>
<div class="clip" style="left:40px;top:304px;width:52px;height:27px">
<div class="t" style="top:7.40px;font:400 16px/16px 'Liberation Serif', serif;color:#000;letter-spacing:0.55px;left:-100.725px;width:253px;text-align:center;">38</div>
</div>
<div class="clip" style="left:93px;top:304px;width:200px;height:27px">
<div class="t" style="top:7.40px;font:400 16px/16px 'Liberation Serif', serif;color:#000;letter-spacing:0.55px;left:1px;">Huỳnh Hoàng Phong</div>
</div>
<div class="clip" style="left:294px;top:304px;width:172px;height:27px">
<div class="t" style="top:7.40px;font:400 16px/16px 'Liberation Serif', serif;color:#000;letter-spacing:0.55px;left:1px;">Lương</div>
</div>
<div class="clip" style="left:467px;top:304px;width:200px;height:27px">
<div class="t" style="top:7.40px;font:400 16px/16px 'Liberation Serif', serif;color:#000;letter-spacing:0.55px;left:1px;">Tăng Lương</div>
</div>
<div class="clip" style="left:668px;top:304px;width:109px;height:27px">
<div class="t" style="top:7.40px;font:400 16px/16px 'Liberation Serif', serif;color:#000;letter-spacing:0.55px;left:-201px;width:307.55px;text-align:right;">4.955.418</div>
</div>
<div class="clip" style="left:1089px;top:304px;width:102px;height:27px">
<div class="t" style="top:7.40px;font:400 16px/16px 'Liberation Serif', serif;color:#000;letter-spacing:0.55px;left:-201px;width:300.55px;text-align:right;">4.955.418</div>
</div>
<div class="clip" style="left:1192px;top:304px;width:102px;height:27px">
<div class="t" style="top:7.40px;font:400 16px/16px 'Liberation Serif', serif;color:#000;letter-spacing:0.55px;left:-201px;width:300.55px;text-align:right;">4.955.418</div>
</div>
<div class="clip" style="left:1295px;top:304px;width:102px;height:27px">
<div class="t" style="top:7.40px;font:400 16px/16px 'Liberation Serif', serif;color:#000;letter-spacing:0.55px;left:1px;">Mới tiếp nhận</div>
</div>
<div class="clip" style="left:40px;top:332px;width:52px;height:27px">
<div class="t" style="top:7.40px;font:400 16px/16px 'Liberation Serif', serif;color:#000;letter-spacing:0.55px;left:-100.725px;width:253px;text-align:center;">39</div>
</div>
<div class="clip" style="left:93px;top:332px;width:200px;height:27px">
<div class="t" style="top:7.40px;font:400 16px/16px 'Liberation Serif', serif;color:#000;letter-spacing:0.55px;left:1px;">Ngô Thị Mỹ Phương</div>
</div>
<div class="clip" style="left:294px;top:332px;width:172px;height:27px">
<div class="t" style="top:7.40px;font:400 16px/16px 'Liberation Serif', serif;color:#000;letter-spacing:0.55px;left:1px;">Lương</div>
</div>
<div class="clip" style="left:467px;top:332px;width:200px;height:27px">
<div class="t" style="top:7.40px;font:400 16px/16px 'Liberation Serif', serif;color:#000;letter-spacing:0.55px;left:1px;">Tăng Lương</div>
</div>
<div class="clip" style="left:668px;top:332px;width:109px;height:27px">
<div class="t" style="top:7.40px;font:400 16px/16px 'Liberation Serif', serif;color:#000;letter-spacing:0.55px;left:-201px;width:307.55px;text-align:right;">4.955.418</div>
</div>
<div class="clip" style="left:1089px;top:332px;width:102px;height:27px">
<div class="t" style="top:7.40px;font:400 16px/16px 'Liberation Serif', serif;color:#000;letter-spacing:0.55px;left:-201px;width:300.55px;text-align:right;">4.955.418</div>
</div>
<div class="clip" style="left:1192px;top:332px;width:102px;height:27px">
<div class="t" style="top:7.40px;font:400 16px/16px 'Liberation Serif', serif;color:#000;letter-spacing:0.55px;left:-201px;width:300.55px;text-align:right;">4.955.418</div>
</div>
<div class="clip" style="left:1295px;top:332px;width:102px;height:27px">
<div class="t" style="top:7.40px;font:400 16px/16px 'Liberation Serif', serif;color:#000;letter-spacing:0.55px;left:1px;">Mới tiếp nhận</div>
</div>
<div class="clip" style="left:40px;top:360px;width:52px;height:27px">
<div class="t" style="top:7.40px;font:400 16px/16px 'Liberation Serif', serif;color:#000;letter-spacing:0.55px;left:-100.725px;width:253px;text-align:center;">40</div>
</div>
<div class="clip" style="left:93px;top:360px;width:200px;height:27px">
<div class="t" style="top:7.40px;font:400 16px/16px 'Liberation Serif', serif;color:#000;letter-spacing:0.55px;left:1px;">Nguyễn Quỳnh Chi</div>
</div>
<div class="clip" style="left:294px;top:360px;width:172px;height:27px">
<div class="t" style="top:7.40px;font:400 16px/16px 'Liberation Serif', serif;color:#000;letter-spacing:0.55px;left:1px;">Lương</div>
</div>
<div class="clip" style="left:986px;top:360px;width:102px;height:27px">
<div class="t" style="top:7.40px;font:400 16px/16px 'Liberation Serif', serif;color:#000;letter-spacing:0.55px;left:-201px;width:300.55px;text-align:right;">5.696.496</div>
</div>
<div class="clip" style="left:1089px;top:360px;width:102px;height:27px">
<div class="t" style="top:7.40px;font:400 16px/16px 'Liberation Serif', serif;color:#000;letter-spacing:0.55px;left:-201px;width:300.55px;text-align:right;">5.696.496</div>
</div>
<div class="clip" style="left:40px;top:388px;width:52px;height:27px">
<div class="t" style="top:7.40px;font:700 16px/16px 'Liberation Serif', serif;color:#000;left:-101.0px;width:253px;text-align:center;">II</div>
</div>
<div class="clip" style="left:93px;top:388px;width:574px;height:27px">
<div class="t" style="top:7.40px;font:700 16px/16px 'Liberation Serif', serif;color:#000;left:1px;">Phụ cấp chức vụ</div>
</div>
<div class="clip" style="left:668px;top:388px;width:109px;height:27px">
<div class="t" style="top:7.40px;font:700 16px/16px 'Liberation Serif', serif;color:#000;left:-201px;width:307px;text-align:right;">761.247</div>
</div>
<div class="clip" style="left:986px;top:388px;width:102px;height:27px">
<div class="t" style="top:7.40px;font:700 16px/16px 'Liberation Serif', serif;color:#000;left:-201px;width:300px;text-align:right;">6.545.882</div>
</div>
<div class="clip" style="left:1089px;top:388px;width:102px;height:27px">
<div class="t" style="top:7.40px;font:700 16px/16px 'Liberation Serif', serif;color:#000;left:-201px;width:300px;text-align:right;">7.307.129</div>
</div>
<div class="clip" style="left:1192px;top:388px;width:102px;height:27px">
<div class="t" style="top:7.40px;font:700 16px/16px 'Liberation Serif', serif;color:#000;left:-201px;width:300px;text-align:right;">761.247</div>
</div>
<div class="clip" style="left:40px;top:416px;width:52px;height:42px">
<div class="t" style="top:14.90px;font:400 16px/16px 'Liberation Serif', serif;color:#000;letter-spacing:0.55px;left:-100.725px;width:253px;text-align:center;">1</div>
</div>
<div class="clip" style="left:93px;top:416px;width:200px;height:42px">
<div class="t" style="top:14.90px;font:400 16px/16px 'Liberation Serif', serif;color:#000;letter-spacing:0.55px;left:1px;">Lê Hữu Hạnh</div>
</div>
<div class="clip" style="left:294px;top:416px;width:172px;height:42px">
<div class="t" style="top:14.90px;font:400 16px/16px 'Liberation Serif', serif;color:#000;letter-spacing:0.55px;left:1px;">Phụ cấp chức vụ</div>
</div>
<div class="clip" style="left:467px;top:416px;width:200px;height:42px">
<div class="t" style="top:14.90px;font:400 16px/16px 'Liberation Serif', serif;color:#000;letter-spacing:0.55px;left:1px;">Tăng Phụ cấp chức vụ</div>
</div>
<div class="clip" style="left:668px;top:416px;width:109px;height:42px">
<div class="t" style="top:14.90px;font:400 16px/16px 'Liberation Serif', serif;color:#000;letter-spacing:0.55px;left:-201px;width:307.55px;text-align:right;">113.703</div>
</div>
<div class="clip" style="left:986px;top:416px;width:102px;height:42px">
<div class="t" style="top:14.90px;font:400 16px/16px 'Liberation Serif', serif;color:#000;letter-spacing:0.55px;left:-201px;width:300.55px;text-align:right;">596.381</div>
</div>
<div class="clip" style="left:1089px;top:416px;width:102px;height:42px">
<div class="t" style="top:14.90px;font:400 16px/16px 'Liberation Serif', serif;color:#000;letter-spacing:0.55px;left:-201px;width:300.55px;text-align:right;">710.084</div>
</div>
<div class="clip" style="left:1192px;top:416px;width:102px;height:42px">
<div class="t" style="top:14.90px;font:400 16px/16px 'Liberation Serif', serif;color:#000;letter-spacing:0.55px;left:-201px;width:300.55px;text-align:right;">113.703</div>
</div>
<div class="clip" style="left:1295px;top:416px;width:102px;height:42px">
<div class="t" style="top:4.90px;font:400 16px/16px 'Liberation Serif', serif;color:#000;letter-spacing:0.55px;left:1px;">Nghỉ không</div>
<div class="t" style="top:24.90px;font:400 16px/16px 'Liberation Serif', serif;color:#000;letter-spacing:0.55px;left:1px;">lương 3 ngày</div>
</div>
<div class="clip" style="left:40px;top:459px;width:52px;height:42px">
<div class="t" style="top:14.90px;font:400 16px/16px 'Liberation Serif', serif;color:#000;letter-spacing:0.55px;left:-100.725px;width:253px;text-align:center;">12</div>
</div>
<div class="clip" style="left:93px;top:459px;width:200px;height:42px">
<div class="t" style="top:14.90px;font:400 16px/16px 'Liberation Serif', serif;color:#000;letter-spacing:0.55px;left:1px;">Nguyễn Thị Thanh Thúy</div>
</div>
<div class="clip" style="left:294px;top:459px;width:172px;height:42px">
<div class="t" style="top:14.90px;font:400 16px/16px 'Liberation Serif', serif;color:#000;letter-spacing:0.55px;left:1px;">Phụ cấp chức vụ</div>
</div>
<div class="clip" style="left:467px;top:459px;width:200px;height:42px">
<div class="t" style="top:14.90px;font:400 16px/16px 'Liberation Serif', serif;color:#000;letter-spacing:0.55px;left:1px;">Tăng Phụ cấp chức vụ</div>
</div>
<div class="clip" style="left:668px;top:459px;width:109px;height:42px">
<div class="t" style="top:14.90px;font:400 16px/16px 'Liberation Serif', serif;color:#000;letter-spacing:0.55px;left:-201px;width:307.55px;text-align:right;">418.860</div>
</div>
<div class="clip" style="left:1089px;top:459px;width:102px;height:42px">
<div class="t" style="top:14.90px;font:400 16px/16px 'Liberation Serif', serif;color:#000;letter-spacing:0.55px;left:-201px;width:300.55px;text-align:right;">418.860</div>
</div>
<div class="clip" style="left:1192px;top:459px;width:102px;height:42px">
<div class="t" style="top:14.90px;font:400 16px/16px 'Liberation Serif', serif;color:#000;letter-spacing:0.55px;left:-201px;width:300.55px;text-align:right;">418.860</div>
</div>
<div class="clip" style="left:40px;top:502px;width:52px;height:27px">
<div class="t" style="top:7.40px;font:400 16px/16px 'Liberation Serif', serif;color:#000;letter-spacing:0.55px;left:-100.725px;width:253px;text-align:center;">13</div>
</div>
<div class="clip" style="left:93px;top:502px;width:200px;height:27px">
<div class="t" style="top:7.40px;font:400 16px/16px 'Liberation Serif', serif;color:#000;letter-spacing:0.55px;left:1px;">Nguyễn Quỳnh Chi</div>
</div>
<div class="clip" style="left:294px;top:502px;width:172px;height:27px">
<div class="t" style="top:7.40px;font:400 16px/16px 'Liberation Serif', serif;color:#000;letter-spacing:0.55px;left:1px;">Phụ cấp chức vụ</div>
</div>
<div class="clip" style="left:986px;top:502px;width:102px;height:27px">
<div class="t" style="top:7.40px;font:400 16px/16px 'Liberation Serif', serif;color:#000;letter-spacing:0.55px;left:-201px;width:300.55px;text-align:right;">837.720</div>
</div>
<div class="clip" style="left:1089px;top:502px;width:102px;height:27px">
<div class="t" style="top:7.40px;font:400 16px/16px 'Liberation Serif', serif;color:#000;letter-spacing:0.55px;left:-201px;width:300.55px;text-align:right;">837.720</div>
</div>
<div class="clip" style="left:40px;top:530px;width:52px;height:27px">
<div class="t" style="top:7.40px;font:700 16px/16px 'Liberation Serif', serif;color:#000;left:-101.0px;width:253px;text-align:center;">III</div>
</div>
<div class="clip" style="left:93px;top:530px;width:574px;height:27px">
<div class="t" style="top:7.40px;font:700 16px/16px 'Liberation Serif', serif;color:#000;left:1px;">Phụ cấp trách nhiệm</div>
</div>
<div class="clip" style="left:986px;top:530px;width:102px;height:27px">
<div class="t" style="top:7.40px;font:700 16px/16px 'Liberation Serif', serif;color:#000;left:-201px;width:300px;text-align:right;">468.000</div>
</div>
<div class="clip" style="left:1089px;top:530px;width:102px;height:27px">
<div class="t" style="top:7.40px;font:700 16px/16px 'Liberation Serif', serif;color:#000;left:-201px;width:300px;text-align:right;">468.000</div>
</div>
<div class="clip" style="left:40px;top:558px;width:52px;height:27px">
<div class="t" style="top:7.40px;font:400 16px/16px 'Liberation Serif', serif;color:#000;letter-spacing:0.55px;left:-100.725px;width:253px;text-align:center;">1</div>
</div>
<div class="clip" style="left:93px;top:558px;width:200px;height:27px">
<div class="t" style="top:7.40px;font:400 16px/16px 'Liberation Serif', serif;color:#000;letter-spacing:0.55px;left:1px;">Trần Thị Thanh Duyên</div>
</div>
<div class="clip" style="left:294px;top:558px;width:172px;height:27px">
<div class="t" style="top:7.40px;font:400 16px/16px 'Liberation Serif', serif;color:#000;letter-spacing:0.55px;left:1px;">Phụ cấp trách nhiệm</div>
</div>
<div class="clip" style="left:986px;top:558px;width:102px;height:27px">
<div class="t" style="top:7.40px;font:400 16px/16px 'Liberation Serif', serif;color:#000;letter-spacing:0.55px;left:-201px;width:300.55px;text-align:right;">468.000</div>
</div>
<div class="clip" style="left:1089px;top:558px;width:102px;height:27px">
<div class="t" style="top:7.40px;font:400 16px/16px 'Liberation Serif', serif;color:#000;letter-spacing:0.55px;left:-201px;width:300.55px;text-align:right;">468.000</div>
</div>
<div class="clip" style="left:40px;top:586px;width:52px;height:27px">
<div class="t" style="top:7.40px;font:700 16px/16px 'Liberation Serif', serif;color:#000;left:-101.0px;width:253px;text-align:center;">IV</div>
</div>
<div class="clip" style="left:93px;top:586px;width:574px;height:27px">
<div class="t" style="top:7.40px;font:700 16px/16px 'Liberation Serif', serif;color:#000;left:1px;">Phụ cấp trách nhiệm công việc</div>
</div>
<div class="clip" style="left:668px;top:586px;width:109px;height:27px">
<div class="t" style="top:7.40px;font:700 16px/16px 'Liberation Serif', serif;color:#000;left:-201px;width:307px;text-align:right;">819.000</div>
</div>
<div class="clip" style="left:986px;top:586px;width:102px;height:27px">
<div class="t" style="top:7.40px;font:700 16px/16px 'Liberation Serif', serif;color:#000;left:-201px;width:300px;text-align:right;">468.000</div>
</div>
<div class="clip" style="left:1089px;top:586px;width:102px;height:27px">
<div class="t" style="top:7.40px;font:700 16px/16px 'Liberation Serif', serif;color:#000;left:-201px;width:300px;text-align:right;">1.287.000</div>
</div>
<div class="clip" style="left:1192px;top:586px;width:102px;height:27px">
<div class="t" style="top:7.40px;font:700 16px/16px 'Liberation Serif', serif;color:#000;left:-201px;width:300px;text-align:right;">819.000</div>
</div>
<div class="clip" style="left:40px;top:614px;width:52px;height:27px">
<div class="t" style="top:7.40px;font:400 16px/16px 'Liberation Serif', serif;color:#000;letter-spacing:0.55px;left:-100.725px;width:253px;text-align:center;">1</div>
</div>
<div class="clip" style="left:93px;top:614px;width:200px;height:27px">
<div class="t" style="top:7.40px;font:400 16px/16px 'Liberation Serif', serif;color:#000;letter-spacing:0.55px;left:1px;">Lê Hữu Hạnh</div>
</div>
<div class="clip" style="left:294px;top:614px;width:172px;height:27px">
<div class="t" style="top:-2.60px;font:400 16px/16px 'Liberation Serif', serif;color:#000;letter-spacing:0.55px;left:1px;">Phụ cấp trách nhiệm</div>
<div class="t" style="top:17.40px;font:400 16px/16px 'Liberation Serif', serif;color:#000;letter-spacing:0.55px;left:1px;">công việc</div>
</div>
<div class="clip" style="left:986px;top:614px;width:102px;height:27px">
<div class="t" style="top:7.40px;font:400 16px/16px 'Liberation Serif', serif;color:#000;letter-spacing:0.55px;left:-201px;width:300.55px;text-align:right;">468.000</div>
</div>
<div class="clip" style="left:1089px;top:614px;width:102px;height:27px">
<div class="t" style="top:7.40px;font:400 16px/16px 'Liberation Serif', serif;color:#000;letter-spacing:0.55px;left:-201px;width:300.55px;text-align:right;">468.000</div>
</div>
<div class="clip" style="left:1295px;top:614px;width:102px;height:27px">
<div class="t" style="top:-2.60px;font:400 16px/16px 'Liberation Serif', serif;color:#000;letter-spacing:0.55px;left:1px;">Nghỉ không</div>
<div class="t" style="top:17.40px;font:400 16px/16px 'Liberation Serif', serif;color:#000;letter-spacing:0.55px;left:1px;">lương 3 ngày</div>
</div>
<div class="clip" style="left:40px;top:642px;width:52px;height:42px">
<div class="t" style="top:14.90px;font:400 16px/16px 'Liberation Serif', serif;color:#000;letter-spacing:0.55px;left:-100.725px;width:253px;text-align:center;">2</div>
</div>
<div class="clip" style="left:93px;top:642px;width:200px;height:42px">
<div class="t" style="top:14.90px;font:400 16px/16px 'Liberation Serif', serif;color:#000;letter-spacing:0.55px;left:1px;">Nguyễn Thị Thu Thủy</div>
</div>
<div class="clip" style="left:294px;top:642px;width:172px;height:42px">
<div class="t" style="top:4.90px;font:400 16px/16px 'Liberation Serif', serif;color:#000;letter-spacing:0.55px;left:1px;">Phụ cấp trách nhiệm</div>
<div class="t" style="top:24.90px;font:400 16px/16px 'Liberation Serif', serif;color:#000;letter-spacing:0.55px;left:1px;">công việc</div>
</div>
<div class="clip" style="left:467px;top:642px;width:200px;height:42px">
<div class="t" style="top:4.90px;font:400 16px/16px 'Liberation Serif', serif;color:#000;letter-spacing:0.55px;left:1px;">Tăng Phụ cấp trách nhiệm</div>
<div class="t" style="top:24.90px;font:400 16px/16px 'Liberation Serif', serif;color:#000;letter-spacing:0.55px;left:1px;">công việc</div>
</div>
<div class="clip" style="left:668px;top:642px;width:109px;height:42px">
<div class="t" style="top:14.90px;font:400 16px/16px 'Liberation Serif', serif;color:#000;letter-spacing:0.55px;left:-201px;width:307.55px;text-align:right;">819.000</div>
</div>
<div class="clip" style="left:1089px;top:642px;width:102px;height:42px">
<div class="t" style="top:14.90px;font:400 16px/16px 'Liberation Serif', serif;color:#000;letter-spacing:0.55px;left:-201px;width:300.55px;text-align:right;">819.000</div>
</div>
<div class="clip" style="left:1192px;top:642px;width:102px;height:42px">
<div class="t" style="top:14.90px;font:400 16px/16px 'Liberation Serif', serif;color:#000;letter-spacing:0.55px;left:-201px;width:300.55px;text-align:right;">819.000</div>
</div>
<div class="clip" style="left:40px;top:685px;width:52px;height:27px">
<div class="t" style="top:7.40px;font:700 16px/16px 'Liberation Serif', serif;color:#000;left:-101.0px;width:253px;text-align:center;">V</div>
</div>
<div class="clip" style="left:93px;top:685px;width:574px;height:27px">
<div class="t" style="top:7.40px;font:700 16px/16px 'Liberation Serif', serif;color:#000;left:1px;">Phụ cấp ưu đãi nghề</div>
</div>
<div class="clip" style="left:668px;top:685px;width:109px;height:27px">
<div class="t" style="top:7.40px;font:700 16px/16px 'Liberation Serif', serif;color:#000;left:-201px;width:307px;text-align:right;">2.330.436</div>
</div>
<div class="clip" style="left:888px;top:685px;width:97px;height:27px">
<div class="t" style="top:7.40px;font:700 16px/16px 'Liberation Serif', serif;color:#000;left:-201px;width:295px;text-align:right;">1.279.852</div>
</div>
<div class="clip" style="left:986px;top:685px;width:102px;height:27px">
<div class="t" style="top:7.40px;font:700 16px/16px 'Liberation Serif', serif;color:#000;left:-201px;width:300px;text-align:right;">117.838.860</div>
</div>
<div class="clip" style="left:1089px;top:685px;width:102px;height:27px">
<div class="t" style="top:7.40px;font:700 16px/16px 'Liberation Serif', serif;color:#000;left:-201px;width:300px;text-align:right;">118.889.444</div>
</div>
<div class="clip" style="left:1192px;top:685px;width:102px;height:27px">
<div class="t" style="top:7.40px;font:700 16px/16px 'Liberation Serif', serif;color:#000;left:-201px;width:300px;text-align:right;">1.050.584</div>
</div>
<div class="clip" style="left:40px;top:713px;width:52px;height:42px">
<div class="t" style="top:14.90px;font:400 16px/16px 'Liberation Serif', serif;color:#000;letter-spacing:0.55px;left:-100.725px;width:253px;text-align:center;">1</div>
</div>
<div class="clip" style="left:93px;top:713px;width:200px;height:42px">
<div class="t" style="top:14.90px;font:400 16px/16px 'Liberation Serif', serif;color:#000;letter-spacing:0.55px;left:1px;">Lê Hữu Hạnh</div>
</div>
<div class="clip" style="left:294px;top:713px;width:172px;height:42px">
<div class="t" style="top:14.90px;font:400 16px/16px 'Liberation Serif', serif;color:#000;letter-spacing:0.55px;left:1px;">Phụ cấp ưu đãi nghề</div>
</div>
<div class="clip" style="left:778px;top:713px;width:109px;height:42px">
<div class="t" style="top:4.90px;font:400 16px/16px 'Liberation Serif', serif;color:#000;letter-spacing:0.55px;left:1px;">Giảm Phụ cấp</div>
<div class="t" style="top:24.90px;font:400 16px/16px 'Liberation Serif', serif;color:#000;letter-spacing:0.55px;left:1px;">ưu đãi nghề</div>
</div>
<div class="clip" style="left:888px;top:713px;width:97px;height:42px">
<div class="t" style="top:14.90px;font:400 16px/16px 'Liberation Serif', serif;color:#000;letter-spacing:0.55px;left:-201px;width:295.55px;text-align:right;">1.030.451</div>
</div>
<div class="clip" style="left:986px;top:713px;width:102px;height:42px">
<div class="t" style="top:14.90px;font:400 16px/16px 'Liberation Serif', serif;color:#000;letter-spacing:0.55px;left:-201px;width:300.55px;text-align:right;">7.085.095</div>
</div>
<div class="clip" style="left:1089px;top:713px;width:102px;height:42px">
<div class="t" style="top:14.90px;font:400 16px/16px 'Liberation Serif', serif;color:#000;letter-spacing:0.55px;left:-201px;width:300.55px;text-align:right;">6.054.644</div>
</div>
<div class="clip" style="left:1192px;top:713px;width:102px;height:42px">
<div class="t" style="top:14.90px;font:400 16px/16px 'Liberation Serif', serif;color:#000;letter-spacing:0.55px;left:-201px;width:300.55px;text-align:right;">-1.030.451</div>
</div>
<div class="clip" style="left:1295px;top:713px;width:102px;height:42px">
<div class="t" style="top:4.90px;font:400 16px/16px 'Liberation Serif', serif;color:#000;letter-spacing:0.55px;left:1px;">Nghỉ không</div>
<div class="t" style="top:24.90px;font:400 16px/16px 'Liberation Serif', serif;color:#000;letter-spacing:0.55px;left:1px;">lương 3 ngày</div>
</div>
<div class="b" style="left:91px;top:457px;width:204px;height:3px;background:#217346;border-radius:1px"></div>
</div>
<div class="b" style="left:41px;top:914px;width:1879px;height:13px;background:#dadada"></div>
<div class="b" style="left:41px;top:917px;width:1688px;height:6px;background:#b3b3b3;border-radius:3px"></div>
<div class="b" style="left:1909px;top:173px;width:11px;height:741px;background:#dadada"></div>
<div class="b" style="left:1912px;top:394px;width:6px;height:70px;background:#b3b3b3;border-radius:3px"></div>
<div class="b" style="left:1px;top:914px;width:39px;height:13px;background:#f0f0f0"></div>
<div class="b" style="left:40px;top:914px;width:1px;height:13px;background:#b9b9b9"></div>
<div class="b" style="left:1px;top:927px;width:1920px;height:27px;background:#f7f7f7"></div>
<div class="t" style="left:11px;top:934.84px;font:400 12px/12px 'Liberation Sans', sans-serif;color:#333;">Ready</div>
<div class="b" style="left:1713px;top:941px;width:12px;height:1.3px;background:#333"></div>
<div class="b" style="left:1731px;top:941px;width:120px;height:1.3px;background:#333"></div>
<div class="b" style="left:1789px;top:937px;width:4px;height:10px;background:#222"></div>
<div class="b" style="left:1857px;top:941px;width:12px;height:1.3px;background:#333"></div>
<div class="b" style="left:1862.5px;top:936px;width:1.3px;height:12px;background:#555"></div>
<div class="t" style="left:1881px;top:934.84px;font:400 12px/12px 'Liberation Sans', sans-serif;color:#333;">100%</div>
<div class="b" style="left:1905px;top:422px;width:16px;height:32px;background:#10a81e;border-radius:4px 0 0 4px"></div>
<svg class="b" style="left:1910px;top:432px" width="8" height="12" viewBox="0 0 8 12"><path d="M1.5 1.2 L6.2 6 L1.5 10.8" fill="none" stroke="#fff" stroke-width="1.6"/></svg>
<div class="b" style="left:1865px;top:458px;width:56px;height:168px;background:#fff;border-radius:16px 6px 6px 16px"></div>
<svg class="b" style="left:1873px;top:466px" width="40" height="40" viewBox="0 0 40 40">
<defs><linearGradient id="gg" x1="0" y1="0" x2="0" y2="1"><stop offset="0" stop-color="#17d483"/><stop offset="1" stop-color="#10a872"/></linearGradient></defs>
<circle cx="20" cy="20" r="20" fill="url(#gg)"/>
<path d="M8 20 C11 12.5 15 9.5 20 9.5 C25 9.5 29 12.5 32 20 C29 27.5 25 30.5 20 30.5 C15 30.5 11 27.5 8 20 Z" fill="#fff"/>
<path d="M20 12.5 C15.8 12.5 13 15.5 13 19.5 C13 23.5 16 26.5 20 26.5 L27 26.5 L25.2 24.8 C26.3 23.4 27 21.6 27 19.5 C27 15.5 24.2 12.5 20 12.5 Z" fill="#13b97a"/>
<circle cx="17.5" cy="19.8" r="1.5" fill="#fff"/><circle cx="22.5" cy="19.8" r="1.5" fill="#fff"/>
</svg>
<svg class="b" style="left:1873px;top:522px" width="40" height="40" viewBox="0 0 40 40">
<circle cx="20" cy="20" r="20" fill="#0a40d8"/>
<ellipse cx="9" cy="12.5" rx="3.8" ry="3.8" fill="#cfe0fa"/><ellipse cx="31" cy="12.5" rx="3.8" ry="3.8" fill="#cfe0fa"/>
<rect x="7.3" y="10.2" width="25.4" height="21" rx="10.5" ry="10" fill="#f4f8fe"/>
<rect x="10.2" y="16" width="19.6" height="11.2" rx="5.6" fill="#0a1a73"/>
<circle cx="15.2" cy="21" r="2.1" fill="#c9d3ee"/><circle cx="24.8" cy="21" r="2.1" fill="#c9d3ee"/>
<circle cx="15.2" cy="21" r="1.1" fill="#555a80"/><circle cx="24.8" cy="21" r="1.1" fill="#555a80"/>
<path d="M18.3 25 Q20 26.6 21.7 25" fill="none" stroke="#c9d3ee" stroke-width="0.9"/>
</svg>
<svg class="b" style="left:1870px;top:575px" width="44" height="44" viewBox="0 0 44 44">
<circle cx="23" cy="23" r="20" fill="#0b74e5"/>
<circle cx="23.1" cy="18.2" r="3.7" fill="#fff"/><circle cx="15.5" cy="17.4" r="2.6" fill="#fff"/><circle cx="30.7" cy="17.4" r="2.6" fill="#fff"/>
<path d="M17.4 29 C17.4 25 19.8 22.9 23.1 22.9 C26.4 22.9 28.8 25 28.8 29 V29.3 C28.8 30.3 28.1 31 27.1 31 H19.1 C18.1 31 17.4 30.3 17.4 29.3 Z" fill="#fff"/>
<path d="M14.1 26.2 C14.1 23.3 15.6 21.4 17.8 21.4 C18.8 21.4 19.6 21.6 20.3 22 C18.6 23.3 17.7 25.2 17.5 27.7 H15.6 C14.8 27.7 14.1 27.1 14.1 26.2 Z" fill="#fff"/>
<path d="M32.1 26.2 C32.1 23.3 30.6 21.4 28.4 21.4 C27.4 21.4 26.6 21.6 25.9 22 C27.6 23.3 28.5 25.2 28.7 27.7 H30.6 C31.4 27.7 32.1 27.1 32.1 26.2 Z" fill="#fff"/>
<circle cx="7" cy="7" r="6" fill="#f9a602"/>
</svg>
<div class="b" style="left:0;top:0;width:1920px;height:953px;border:1px solid #000;pointer-events:none"></div>
<div class="b" style="left:1px;top:1px;width:1918px;height:951px;border:1px solid #fff;pointer-events:none;border-right-color:#fff"></div>
</body></html>
